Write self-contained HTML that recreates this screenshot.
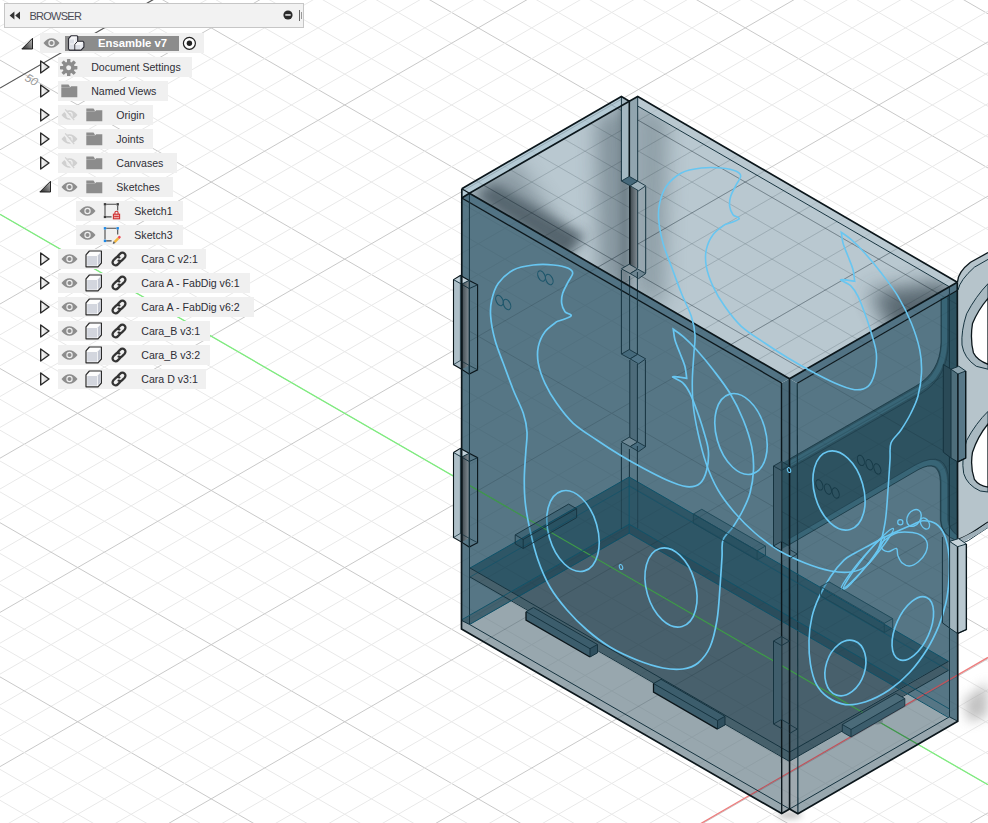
<!DOCTYPE html>
<html><head><meta charset="utf-8"><title>Fusion</title>
<style>
html,body{margin:0;padding:0;background:#fff;}
body{width:988px;height:823px;overflow:hidden;position:relative;font-family:"Liberation Sans",sans-serif;}
#cv{position:absolute;left:0;top:0;}

#hdr{position:absolute;left:4px;top:3px;width:298px;height:23px;background:#f2f2f2;border:1px solid #c6c6c6;}
#hdr .t{position:absolute;left:24.5px;top:4.5px;font-size:11px;color:#4b4b55;letter-spacing:-0.75px;line-height:14px;}
.row{position:absolute;height:19.5px;background:#f0f0f0;}
.lb{position:absolute;font-size:10.6px;line-height:14px;color:#2e2e36;white-space:nowrap;}
.ic{position:absolute;}
.sel{position:absolute;left:65px;top:35.5px;width:114px;height:15.5px;background:#8c8c8c;}
.selt{position:absolute;left:98px;top:36.2px;font-size:11.3px;line-height:14px;font-weight:bold;color:#fff;white-space:nowrap;}

</style></head><body>
<svg id="cv" width="988" height="823" viewBox="0 0 988 823">
<defs>
<filter id="b6" x="-100%" y="-100%" width="300%" height="300%"><feGaussianBlur stdDeviation="6"/></filter>
<filter id="b10" x="-100%" y="-100%" width="300%" height="300%"><feGaussianBlur stdDeviation="10"/></filter>
<filter id="b3" x="-100%" y="-100%" width="300%" height="300%"><feGaussianBlur stdDeviation="3"/></filter>
<linearGradient id="gTab" x1="0" y1="0" x2="1" y2="0"><stop offset="0" stop-color="#3d474d"/><stop offset="1" stop-color="#838e95"/></linearGradient>
<clipPath id="cTop"><polygon points="469.4,193.2 629.3,101.2 949.2,286.8 789.5,378.75"/></clipPath>
<clipPath id="cFL"><polygon points="461.8,198 781.5,383 781.7,813.6 461.5,629"/></clipPath>
<clipPath id="cFR"><polygon points="797.3,383.2 957.5,290.3 957.8,721.3 797.9,813.8"/></clipPath>
<clipPath id="cModel"><polygon points="461.8,188.7 621.4,96.5 629.3,101.2 637.7,96.5 957.5,282.3 957.8,721.3 797.9,813.8 789.6,809 781.7,813.6 461.5,629"/></clipPath>
</defs>
<g id="grid"><line x1="0" y1="-556.7" x2="988" y2="13.8" stroke="#c9c9c9" stroke-width="1"/>
<line x1="0" y1="-525.9" x2="988" y2="44.6" stroke="#e9e9e9" stroke-width="1"/>
<line x1="0" y1="-495.0" x2="988" y2="75.5" stroke="#e9e9e9" stroke-width="1"/>
<line x1="0" y1="-464.2" x2="988" y2="106.3" stroke="#e9e9e9" stroke-width="1"/>
<line x1="0" y1="-433.3" x2="988" y2="137.1" stroke="#e9e9e9" stroke-width="1"/>
<line x1="0" y1="-402.5" x2="988" y2="168.0" stroke="#c9c9c9" stroke-width="1"/>
<line x1="0" y1="-371.7" x2="988" y2="198.8" stroke="#e9e9e9" stroke-width="1"/>
<line x1="0" y1="-340.8" x2="988" y2="229.7" stroke="#e9e9e9" stroke-width="1"/>
<line x1="0" y1="-310.0" x2="988" y2="260.5" stroke="#e9e9e9" stroke-width="1"/>
<line x1="0" y1="-279.1" x2="988" y2="291.3" stroke="#e9e9e9" stroke-width="1"/>
<line x1="0" y1="-248.3" x2="988" y2="322.2" stroke="#c9c9c9" stroke-width="1"/>
<line x1="0" y1="-217.5" x2="988" y2="353.0" stroke="#e9e9e9" stroke-width="1"/>
<line x1="0" y1="-186.6" x2="988" y2="383.9" stroke="#e9e9e9" stroke-width="1"/>
<line x1="0" y1="-155.8" x2="988" y2="414.7" stroke="#e9e9e9" stroke-width="1"/>
<line x1="0" y1="-124.9" x2="988" y2="445.5" stroke="#e9e9e9" stroke-width="1"/>
<line x1="0" y1="-94.1" x2="988" y2="476.4" stroke="#c9c9c9" stroke-width="1"/>
<line x1="0" y1="-4.4" x2="988" y2="-574.9" stroke="#c9c9c9" stroke-width="1"/>
<line x1="0" y1="-63.3" x2="988" y2="507.2" stroke="#e9e9e9" stroke-width="1"/>
<line x1="0" y1="26.4" x2="988" y2="-544.0" stroke="#e9e9e9" stroke-width="1"/>
<line x1="0" y1="-32.4" x2="988" y2="538.1" stroke="#e9e9e9" stroke-width="1"/>
<line x1="0" y1="57.3" x2="988" y2="-513.2" stroke="#e9e9e9" stroke-width="1"/>
<line x1="0" y1="-1.6" x2="988" y2="568.9" stroke="#e9e9e9" stroke-width="1"/>
<line x1="0" y1="88.1" x2="988" y2="-482.4" stroke="#e9e9e9" stroke-width="1"/>
<line x1="0" y1="29.3" x2="988" y2="599.7" stroke="#e9e9e9" stroke-width="1"/>
<line x1="0" y1="119.0" x2="988" y2="-451.5" stroke="#e9e9e9" stroke-width="1"/>
<line x1="0" y1="60.1" x2="988" y2="630.6" stroke="#c9c9c9" stroke-width="1"/>
<line x1="0" y1="149.8" x2="988" y2="-420.7" stroke="#c9c9c9" stroke-width="1"/>
<line x1="0" y1="90.9" x2="988" y2="661.4" stroke="#e9e9e9" stroke-width="1"/>
<line x1="0" y1="180.6" x2="988" y2="-389.8" stroke="#e9e9e9" stroke-width="1"/>
<line x1="0" y1="121.8" x2="988" y2="692.3" stroke="#e9e9e9" stroke-width="1"/>
<line x1="0" y1="211.5" x2="988" y2="-359.0" stroke="#e9e9e9" stroke-width="1"/>
<line x1="0" y1="152.6" x2="988" y2="723.1" stroke="#e9e9e9" stroke-width="1"/>
<line x1="0" y1="242.3" x2="988" y2="-328.2" stroke="#e9e9e9" stroke-width="1"/>
<line x1="0" y1="183.5" x2="988" y2="753.9" stroke="#e9e9e9" stroke-width="1"/>
<line x1="0" y1="273.2" x2="988" y2="-297.3" stroke="#e9e9e9" stroke-width="1"/>
<line x1="0" y1="214.3" x2="988" y2="784.8" stroke="#c9c9c9" stroke-width="1"/>
<line x1="0" y1="304.0" x2="988" y2="-266.5" stroke="#c9c9c9" stroke-width="1"/>
<line x1="0" y1="245.1" x2="988" y2="815.6" stroke="#e9e9e9" stroke-width="1"/>
<line x1="0" y1="334.8" x2="988" y2="-235.6" stroke="#e9e9e9" stroke-width="1"/>
<line x1="0" y1="276.0" x2="988" y2="846.5" stroke="#e9e9e9" stroke-width="1"/>
<line x1="0" y1="365.7" x2="988" y2="-204.8" stroke="#e9e9e9" stroke-width="1"/>
<line x1="0" y1="306.8" x2="988" y2="877.3" stroke="#e9e9e9" stroke-width="1"/>
<line x1="0" y1="396.5" x2="988" y2="-174.0" stroke="#e9e9e9" stroke-width="1"/>
<line x1="0" y1="337.7" x2="988" y2="908.1" stroke="#e9e9e9" stroke-width="1"/>
<line x1="0" y1="427.4" x2="988" y2="-143.1" stroke="#e9e9e9" stroke-width="1"/>
<line x1="0" y1="368.5" x2="988" y2="939.0" stroke="#c9c9c9" stroke-width="1"/>
<line x1="0" y1="458.2" x2="988" y2="-112.3" stroke="#c9c9c9" stroke-width="1"/>
<line x1="0" y1="399.3" x2="988" y2="969.8" stroke="#e9e9e9" stroke-width="1"/>
<line x1="0" y1="489.0" x2="988" y2="-81.4" stroke="#e9e9e9" stroke-width="1"/>
<line x1="0" y1="430.2" x2="988" y2="1000.7" stroke="#e9e9e9" stroke-width="1"/>
<line x1="0" y1="519.9" x2="988" y2="-50.6" stroke="#e9e9e9" stroke-width="1"/>
<line x1="0" y1="461.0" x2="988" y2="1031.5" stroke="#e9e9e9" stroke-width="1"/>
<line x1="0" y1="550.7" x2="988" y2="-19.8" stroke="#e9e9e9" stroke-width="1"/>
<line x1="0" y1="491.9" x2="988" y2="1062.3" stroke="#e9e9e9" stroke-width="1"/>
<line x1="0" y1="581.6" x2="988" y2="11.1" stroke="#e9e9e9" stroke-width="1"/>
<line x1="0" y1="522.7" x2="988" y2="1093.2" stroke="#c9c9c9" stroke-width="1"/>
<line x1="0" y1="612.4" x2="988" y2="41.9" stroke="#c9c9c9" stroke-width="1"/>
<line x1="0" y1="553.5" x2="988" y2="1124.0" stroke="#e9e9e9" stroke-width="1"/>
<line x1="0" y1="643.2" x2="988" y2="72.8" stroke="#e9e9e9" stroke-width="1"/>
<line x1="0" y1="584.4" x2="988" y2="1154.9" stroke="#e9e9e9" stroke-width="1"/>
<line x1="0" y1="674.1" x2="988" y2="103.6" stroke="#e9e9e9" stroke-width="1"/>
<line x1="0" y1="615.2" x2="988" y2="1185.7" stroke="#e9e9e9" stroke-width="1"/>
<line x1="0" y1="704.9" x2="988" y2="134.4" stroke="#e9e9e9" stroke-width="1"/>
<line x1="0" y1="646.1" x2="988" y2="1216.5" stroke="#e9e9e9" stroke-width="1"/>
<line x1="0" y1="735.8" x2="988" y2="165.3" stroke="#e9e9e9" stroke-width="1"/>
<line x1="0" y1="676.9" x2="988" y2="1247.4" stroke="#c9c9c9" stroke-width="1"/>
<line x1="0" y1="766.6" x2="988" y2="196.1" stroke="#c9c9c9" stroke-width="1"/>
<line x1="0" y1="707.7" x2="988" y2="1278.2" stroke="#e9e9e9" stroke-width="1"/>
<line x1="0" y1="797.4" x2="988" y2="227.0" stroke="#e9e9e9" stroke-width="1"/>
<line x1="0" y1="738.6" x2="988" y2="1309.1" stroke="#e9e9e9" stroke-width="1"/>
<line x1="0" y1="828.3" x2="988" y2="257.8" stroke="#e9e9e9" stroke-width="1"/>
<line x1="0" y1="769.4" x2="988" y2="1339.9" stroke="#e9e9e9" stroke-width="1"/>
<line x1="0" y1="859.1" x2="988" y2="288.6" stroke="#e9e9e9" stroke-width="1"/>
<line x1="0" y1="800.3" x2="988" y2="1370.7" stroke="#e9e9e9" stroke-width="1"/>
<line x1="0" y1="890.0" x2="988" y2="319.5" stroke="#e9e9e9" stroke-width="1"/>
<line x1="0" y1="920.8" x2="988" y2="350.3" stroke="#c9c9c9" stroke-width="1"/>
<line x1="0" y1="951.6" x2="988" y2="381.2" stroke="#e9e9e9" stroke-width="1"/>
<line x1="0" y1="982.5" x2="988" y2="412.0" stroke="#e9e9e9" stroke-width="1"/>
<line x1="0" y1="1013.3" x2="988" y2="442.8" stroke="#e9e9e9" stroke-width="1"/>
<line x1="0" y1="1044.2" x2="988" y2="473.7" stroke="#e9e9e9" stroke-width="1"/>
<line x1="0" y1="1075.0" x2="988" y2="504.5" stroke="#c9c9c9" stroke-width="1"/>
<line x1="0" y1="1105.8" x2="988" y2="535.4" stroke="#e9e9e9" stroke-width="1"/>
<line x1="0" y1="1136.7" x2="988" y2="566.2" stroke="#e9e9e9" stroke-width="1"/>
<line x1="0" y1="1167.5" x2="988" y2="597.0" stroke="#e9e9e9" stroke-width="1"/>
<line x1="0" y1="1198.4" x2="988" y2="627.9" stroke="#e9e9e9" stroke-width="1"/>
<line x1="0" y1="1229.2" x2="988" y2="658.7" stroke="#c9c9c9" stroke-width="1"/>
<line x1="0" y1="1260.0" x2="988" y2="689.6" stroke="#e9e9e9" stroke-width="1"/>
<line x1="0" y1="1290.9" x2="988" y2="720.4" stroke="#e9e9e9" stroke-width="1"/>
<line x1="0" y1="1321.7" x2="988" y2="751.2" stroke="#e9e9e9" stroke-width="1"/>
<line x1="0" y1="1352.6" x2="988" y2="782.1" stroke="#e9e9e9" stroke-width="1"/>
<line x1="0" y1="1383.4" x2="988" y2="812.9" stroke="#c9c9c9" stroke-width="1"/></g>
<line x1="0" y1="214.3" x2="988" y2="784.8" stroke="#7dee7d" stroke-width="1.3"/>
<line x1="0" y1="1229" x2="988" y2="657.4" stroke="#ee7d7d" stroke-width="1.3"/>
<line x1="0" y1="88.1" x2="160" y2="-4.3" stroke="#555" stroke-width="1.2"/>
<text x="0" y="0" transform="translate(24,80) rotate(30)" font-family="Liberation Sans, sans-serif" font-size="11.5" font-style="italic" fill="#9a9a9a">50</text>
<text x="0" y="0" transform="translate(158,-5) rotate(30)" font-family="Liberation Sans, sans-serif" font-size="11.5" font-style="italic" fill="#9a9a9a">50</text>
<ellipse cx="790" cy="815" rx="12" ry="4" fill="#888" opacity="0.5" filter="url(#b3)"/>
<polygon points="469.4,193.2 629.3,101.2 949.4,286.8 789.5,378.8" fill="#b9c8d0" stroke="none" stroke-width="1" />
<polygon points="461.8,188.7 621.4,96.5 629.3,101.2 469.4,193.2 461.8,198.0" fill="#b4cad5" stroke="none" stroke-width="1" />
<polygon points="629.3,101.2 637.7,96.5 957.3,282.3 949.4,286.8" fill="#b9c8d0" stroke="none" stroke-width="1" />
<g clip-path="url(#cTop)">
<polygon points="476,196 494,184 585,236 566,260" fill="#3f4f58" opacity="0.82" filter="url(#b6)"/>
<polygon points="462,186 515,160 560,225 500,232" fill="#56666f" opacity="0.45" filter="url(#b10)"/>
<polygon points="596,120 630,100 630,300 600,280" fill="#5f7079" opacity="0.6" filter="url(#b10)"/>
<polygon points="620,105 630,100 630,290 620,285" fill="#56666f" opacity="0.55" filter="url(#b3)"/>
<polygon points="637,100 668,118 664,310 637,295" fill="#6a7b84" opacity="0.55" filter="url(#b10)"/>
<polygon points="870,292 952,280 952,360 900,350" fill="#3f4f58" opacity="0.8" filter="url(#b10)"/>
</g>
<polygon points="461.8,198.0 781.5,383.0 781.7,813.6 461.5,629.0" fill="#567685" stroke="none" stroke-width="1" />
<polygon points="469.4,193.2 789.5,378.8 781.5,383.0 461.8,198.0" fill="#527384" stroke="none" stroke-width="1" />
<polygon points="797.3,383.2 957.5,290.3 957.8,721.3 797.9,813.8" fill="#567685" stroke="none" stroke-width="1" />
<polygon points="789.5,378.8 949.4,286.8 957.5,282.5 957.5,290.3 797.3,383.2" fill="#527384" stroke="none" stroke-width="1" />
<polygon points="781.5,383.0 789.5,378.8 789.6,809.0 781.7,813.6" fill="#4b6a79" stroke="none" stroke-width="1" />
<polygon points="789.5,378.8 797.3,383.2 797.9,813.8 789.6,809.0" fill="#507282" stroke="none" stroke-width="1" />
<g clip-path="url(#cModel)">
<polygon points="470.0,568.0 629.2,477.0 629.2,533.2 519.4,596.5" fill="#2e5666" stroke="none" stroke-width="1" />
<polygon points="629.2,477.0 948.5,661.3 898.7,688.8 629.2,533.2" fill="#2e5666" stroke="none" stroke-width="1" />
<polygon points="629.2,533.2 898.7,688.8 789.3,752.3 519.4,596.5" fill="#48606c" stroke="none" stroke-width="1" />
<polygon points="629.2,524.2 629.2,533.2 519.4,596.5 511.6,592.0" fill="#2a4d5c" stroke="none" stroke-width="1" />
<polygon points="629.2,524.2 906.8,684.4 898.7,688.8 629.2,533.2" fill="#2a4d5c" stroke="none" stroke-width="1" />
<polygon points="470.0,568.0 789.3,752.3 789.3,761.3 470.0,577.0" fill="#46606b" stroke="none" stroke-width="1" />
<polygon points="789.3,752.3 948.5,661.3 948.5,670.3 789.3,761.3" fill="#425c68" stroke="none" stroke-width="1" />
<polygon points="469.6,624.5 511.6,600.6 781.7,756.6 781.7,813.6 461.5,629.0 461.5,620.4" fill="#98a7ae" stroke="none" stroke-width="1" />
<polygon points="461.5,619.9 502.4,596.3 511.6,600.6 469.6,624.5 461.5,620.4" fill="#43626f" stroke="none" stroke-width="1" />
<polygon points="797.3,756.7 906.9,693.4 949.5,717.5 957.8,721.3 797.9,813.8" fill="#98a7ae" stroke="none" stroke-width="1" />
<polygon points="781.5,757.0 789.5,761.3 789.6,809.0 781.7,813.6" fill="#9ba6ac" stroke="none" stroke-width="1" />
<polygon points="789.5,761.3 797.3,756.7 797.9,813.8 789.6,809.0" fill="#9fa9af" stroke="none" stroke-width="1" />
</g>
<g clip-path="url(#cModel)"><path d="M941,298.5 L941,343 Q940,372 916,386 L781.5,463.6 L781.5,549.2 L918,469.8 Q939.5,458 940.4,482 L940.4,520 Q941,535 957.5,541 L957.5,290.3 L949.5,295 Z" fill="#2d5260"/>
<path d="M944.5,296.5 L944.5,343 Q943.5,375 919,389.5 L789.5,464" fill="none" stroke="#3b687a" stroke-width="5" opacity="0.85"/>
<path d="M789.5,541.5 L917,467.2 Q943.5,453 944.4,482 L944.4,520 Q945,532 957.5,538.5" fill="none" stroke="#3b687a" stroke-width="5.5" opacity="0.85"/>
<path d="M941,298.5 L941,343 Q940,372 916,386 L789.5,459" fill="none" stroke="#16333f" stroke-width="0.9" opacity="0.8"/>
<path d="M948.3,294 L948.3,344 Q947,378 922,393 L789.5,469" fill="none" stroke="#16333f" stroke-width="0.8" opacity="0.6"/>
<path d="M789.5,544.5 L918,469.8 Q939.5,458 940.4,482 L940.4,520 Q941,535 957.5,541" fill="none" stroke="#16333f" stroke-width="0.9" opacity="0.8"/>
<path d="M789.5,538.5 L916,464.6 Q948,448 948.6,482 L948.6,520 Q949.2,530 957.5,535.5" fill="none" stroke="#16333f" stroke-width="0.8" opacity="0.6"/>
</g>
<g clip-path="url(#cTop)"><line x1="0" y1="-556.7" x2="988" y2="13.8" stroke="rgba(20,35,45,0.27)" stroke-width="1"/>
<line x1="0" y1="-525.9" x2="988" y2="44.6" stroke="rgba(20,35,45,0.11)" stroke-width="1"/>
<line x1="0" y1="-495.0" x2="988" y2="75.5" stroke="rgba(20,35,45,0.11)" stroke-width="1"/>
<line x1="0" y1="-464.2" x2="988" y2="106.3" stroke="rgba(20,35,45,0.11)" stroke-width="1"/>
<line x1="0" y1="-433.3" x2="988" y2="137.1" stroke="rgba(20,35,45,0.11)" stroke-width="1"/>
<line x1="0" y1="-402.5" x2="988" y2="168.0" stroke="rgba(20,35,45,0.27)" stroke-width="1"/>
<line x1="0" y1="-371.7" x2="988" y2="198.8" stroke="rgba(20,35,45,0.11)" stroke-width="1"/>
<line x1="0" y1="-340.8" x2="988" y2="229.7" stroke="rgba(20,35,45,0.11)" stroke-width="1"/>
<line x1="0" y1="-310.0" x2="988" y2="260.5" stroke="rgba(20,35,45,0.11)" stroke-width="1"/>
<line x1="0" y1="-279.1" x2="988" y2="291.3" stroke="rgba(20,35,45,0.11)" stroke-width="1"/>
<line x1="0" y1="-248.3" x2="988" y2="322.2" stroke="rgba(20,35,45,0.27)" stroke-width="1"/>
<line x1="0" y1="-217.5" x2="988" y2="353.0" stroke="rgba(20,35,45,0.11)" stroke-width="1"/>
<line x1="0" y1="-186.6" x2="988" y2="383.9" stroke="rgba(20,35,45,0.11)" stroke-width="1"/>
<line x1="0" y1="-155.8" x2="988" y2="414.7" stroke="rgba(20,35,45,0.11)" stroke-width="1"/>
<line x1="0" y1="-124.9" x2="988" y2="445.5" stroke="rgba(20,35,45,0.11)" stroke-width="1"/>
<line x1="0" y1="-94.1" x2="988" y2="476.4" stroke="rgba(20,35,45,0.27)" stroke-width="1"/>
<line x1="0" y1="-4.4" x2="988" y2="-574.9" stroke="rgba(20,35,45,0.27)" stroke-width="1"/>
<line x1="0" y1="-63.3" x2="988" y2="507.2" stroke="rgba(20,35,45,0.11)" stroke-width="1"/>
<line x1="0" y1="26.4" x2="988" y2="-544.0" stroke="rgba(20,35,45,0.11)" stroke-width="1"/>
<line x1="0" y1="-32.4" x2="988" y2="538.1" stroke="rgba(20,35,45,0.11)" stroke-width="1"/>
<line x1="0" y1="57.3" x2="988" y2="-513.2" stroke="rgba(20,35,45,0.11)" stroke-width="1"/>
<line x1="0" y1="-1.6" x2="988" y2="568.9" stroke="rgba(20,35,45,0.11)" stroke-width="1"/>
<line x1="0" y1="88.1" x2="988" y2="-482.4" stroke="rgba(20,35,45,0.11)" stroke-width="1"/>
<line x1="0" y1="29.3" x2="988" y2="599.7" stroke="rgba(20,35,45,0.11)" stroke-width="1"/>
<line x1="0" y1="119.0" x2="988" y2="-451.5" stroke="rgba(20,35,45,0.11)" stroke-width="1"/>
<line x1="0" y1="60.1" x2="988" y2="630.6" stroke="rgba(20,35,45,0.27)" stroke-width="1"/>
<line x1="0" y1="149.8" x2="988" y2="-420.7" stroke="rgba(20,35,45,0.27)" stroke-width="1"/>
<line x1="0" y1="90.9" x2="988" y2="661.4" stroke="rgba(20,35,45,0.11)" stroke-width="1"/>
<line x1="0" y1="180.6" x2="988" y2="-389.8" stroke="rgba(20,35,45,0.11)" stroke-width="1"/>
<line x1="0" y1="121.8" x2="988" y2="692.3" stroke="rgba(20,35,45,0.11)" stroke-width="1"/>
<line x1="0" y1="211.5" x2="988" y2="-359.0" stroke="rgba(20,35,45,0.11)" stroke-width="1"/>
<line x1="0" y1="152.6" x2="988" y2="723.1" stroke="rgba(20,35,45,0.11)" stroke-width="1"/>
<line x1="0" y1="242.3" x2="988" y2="-328.2" stroke="rgba(20,35,45,0.11)" stroke-width="1"/>
<line x1="0" y1="183.5" x2="988" y2="753.9" stroke="rgba(20,35,45,0.11)" stroke-width="1"/>
<line x1="0" y1="273.2" x2="988" y2="-297.3" stroke="rgba(20,35,45,0.11)" stroke-width="1"/>
<line x1="0" y1="214.3" x2="988" y2="784.8" stroke="rgba(20,35,45,0.27)" stroke-width="1"/>
<line x1="0" y1="304.0" x2="988" y2="-266.5" stroke="rgba(20,35,45,0.27)" stroke-width="1"/>
<line x1="0" y1="245.1" x2="988" y2="815.6" stroke="rgba(20,35,45,0.11)" stroke-width="1"/>
<line x1="0" y1="334.8" x2="988" y2="-235.6" stroke="rgba(20,35,45,0.11)" stroke-width="1"/>
<line x1="0" y1="276.0" x2="988" y2="846.5" stroke="rgba(20,35,45,0.11)" stroke-width="1"/>
<line x1="0" y1="365.7" x2="988" y2="-204.8" stroke="rgba(20,35,45,0.11)" stroke-width="1"/>
<line x1="0" y1="306.8" x2="988" y2="877.3" stroke="rgba(20,35,45,0.11)" stroke-width="1"/>
<line x1="0" y1="396.5" x2="988" y2="-174.0" stroke="rgba(20,35,45,0.11)" stroke-width="1"/>
<line x1="0" y1="337.7" x2="988" y2="908.1" stroke="rgba(20,35,45,0.11)" stroke-width="1"/>
<line x1="0" y1="427.4" x2="988" y2="-143.1" stroke="rgba(20,35,45,0.11)" stroke-width="1"/>
<line x1="0" y1="368.5" x2="988" y2="939.0" stroke="rgba(20,35,45,0.27)" stroke-width="1"/>
<line x1="0" y1="458.2" x2="988" y2="-112.3" stroke="rgba(20,35,45,0.27)" stroke-width="1"/>
<line x1="0" y1="399.3" x2="988" y2="969.8" stroke="rgba(20,35,45,0.11)" stroke-width="1"/>
<line x1="0" y1="489.0" x2="988" y2="-81.4" stroke="rgba(20,35,45,0.11)" stroke-width="1"/>
<line x1="0" y1="430.2" x2="988" y2="1000.7" stroke="rgba(20,35,45,0.11)" stroke-width="1"/>
<line x1="0" y1="519.9" x2="988" y2="-50.6" stroke="rgba(20,35,45,0.11)" stroke-width="1"/>
<line x1="0" y1="461.0" x2="988" y2="1031.5" stroke="rgba(20,35,45,0.11)" stroke-width="1"/>
<line x1="0" y1="550.7" x2="988" y2="-19.8" stroke="rgba(20,35,45,0.11)" stroke-width="1"/>
<line x1="0" y1="491.9" x2="988" y2="1062.3" stroke="rgba(20,35,45,0.11)" stroke-width="1"/>
<line x1="0" y1="581.6" x2="988" y2="11.1" stroke="rgba(20,35,45,0.11)" stroke-width="1"/>
<line x1="0" y1="522.7" x2="988" y2="1093.2" stroke="rgba(20,35,45,0.27)" stroke-width="1"/>
<line x1="0" y1="612.4" x2="988" y2="41.9" stroke="rgba(20,35,45,0.27)" stroke-width="1"/>
<line x1="0" y1="553.5" x2="988" y2="1124.0" stroke="rgba(20,35,45,0.11)" stroke-width="1"/>
<line x1="0" y1="643.2" x2="988" y2="72.8" stroke="rgba(20,35,45,0.11)" stroke-width="1"/>
<line x1="0" y1="584.4" x2="988" y2="1154.9" stroke="rgba(20,35,45,0.11)" stroke-width="1"/>
<line x1="0" y1="674.1" x2="988" y2="103.6" stroke="rgba(20,35,45,0.11)" stroke-width="1"/>
<line x1="0" y1="615.2" x2="988" y2="1185.7" stroke="rgba(20,35,45,0.11)" stroke-width="1"/>
<line x1="0" y1="704.9" x2="988" y2="134.4" stroke="rgba(20,35,45,0.11)" stroke-width="1"/>
<line x1="0" y1="646.1" x2="988" y2="1216.5" stroke="rgba(20,35,45,0.11)" stroke-width="1"/>
<line x1="0" y1="735.8" x2="988" y2="165.3" stroke="rgba(20,35,45,0.11)" stroke-width="1"/>
<line x1="0" y1="676.9" x2="988" y2="1247.4" stroke="rgba(20,35,45,0.27)" stroke-width="1"/>
<line x1="0" y1="766.6" x2="988" y2="196.1" stroke="rgba(20,35,45,0.27)" stroke-width="1"/>
<line x1="0" y1="707.7" x2="988" y2="1278.2" stroke="rgba(20,35,45,0.11)" stroke-width="1"/>
<line x1="0" y1="797.4" x2="988" y2="227.0" stroke="rgba(20,35,45,0.11)" stroke-width="1"/>
<line x1="0" y1="738.6" x2="988" y2="1309.1" stroke="rgba(20,35,45,0.11)" stroke-width="1"/>
<line x1="0" y1="828.3" x2="988" y2="257.8" stroke="rgba(20,35,45,0.11)" stroke-width="1"/>
<line x1="0" y1="769.4" x2="988" y2="1339.9" stroke="rgba(20,35,45,0.11)" stroke-width="1"/>
<line x1="0" y1="859.1" x2="988" y2="288.6" stroke="rgba(20,35,45,0.11)" stroke-width="1"/>
<line x1="0" y1="800.3" x2="988" y2="1370.7" stroke="rgba(20,35,45,0.11)" stroke-width="1"/>
<line x1="0" y1="890.0" x2="988" y2="319.5" stroke="rgba(20,35,45,0.11)" stroke-width="1"/>
<line x1="0" y1="920.8" x2="988" y2="350.3" stroke="rgba(20,35,45,0.27)" stroke-width="1"/>
<line x1="0" y1="951.6" x2="988" y2="381.2" stroke="rgba(20,35,45,0.11)" stroke-width="1"/>
<line x1="0" y1="982.5" x2="988" y2="412.0" stroke="rgba(20,35,45,0.11)" stroke-width="1"/>
<line x1="0" y1="1013.3" x2="988" y2="442.8" stroke="rgba(20,35,45,0.11)" stroke-width="1"/>
<line x1="0" y1="1044.2" x2="988" y2="473.7" stroke="rgba(20,35,45,0.11)" stroke-width="1"/>
<line x1="0" y1="1075.0" x2="988" y2="504.5" stroke="rgba(20,35,45,0.27)" stroke-width="1"/>
<line x1="0" y1="1105.8" x2="988" y2="535.4" stroke="rgba(20,35,45,0.11)" stroke-width="1"/>
<line x1="0" y1="1136.7" x2="988" y2="566.2" stroke="rgba(20,35,45,0.11)" stroke-width="1"/>
<line x1="0" y1="1167.5" x2="988" y2="597.0" stroke="rgba(20,35,45,0.11)" stroke-width="1"/>
<line x1="0" y1="1198.4" x2="988" y2="627.9" stroke="rgba(20,35,45,0.11)" stroke-width="1"/>
<line x1="0" y1="1229.2" x2="988" y2="658.7" stroke="rgba(20,35,45,0.27)" stroke-width="1"/>
<line x1="0" y1="1260.0" x2="988" y2="689.6" stroke="rgba(20,35,45,0.11)" stroke-width="1"/>
<line x1="0" y1="1290.9" x2="988" y2="720.4" stroke="rgba(20,35,45,0.11)" stroke-width="1"/>
<line x1="0" y1="1321.7" x2="988" y2="751.2" stroke="rgba(20,35,45,0.11)" stroke-width="1"/>
<line x1="0" y1="1352.6" x2="988" y2="782.1" stroke="rgba(20,35,45,0.11)" stroke-width="1"/>
<line x1="0" y1="1383.4" x2="988" y2="812.9" stroke="rgba(20,35,45,0.27)" stroke-width="1"/></g>
<g clip-path="url(#cModel)" opacity="0.16"><line x1="0" y1="-556.7" x2="988" y2="13.8" stroke="#0c1c24" stroke-width="1"/>
<line x1="0" y1="-402.5" x2="988" y2="168.0" stroke="#0c1c24" stroke-width="1"/>
<line x1="0" y1="-248.3" x2="988" y2="322.2" stroke="#0c1c24" stroke-width="1"/>
<line x1="0" y1="-94.1" x2="988" y2="476.4" stroke="#0c1c24" stroke-width="1"/>
<line x1="0" y1="-4.4" x2="988" y2="-574.9" stroke="#0c1c24" stroke-width="1"/>
<line x1="0" y1="60.1" x2="988" y2="630.6" stroke="#0c1c24" stroke-width="1"/>
<line x1="0" y1="149.8" x2="988" y2="-420.7" stroke="#0c1c24" stroke-width="1"/>
<line x1="0" y1="214.3" x2="988" y2="784.8" stroke="#0c1c24" stroke-width="1"/>
<line x1="0" y1="304.0" x2="988" y2="-266.5" stroke="#0c1c24" stroke-width="1"/>
<line x1="0" y1="368.5" x2="988" y2="939.0" stroke="#0c1c24" stroke-width="1"/>
<line x1="0" y1="458.2" x2="988" y2="-112.3" stroke="#0c1c24" stroke-width="1"/>
<line x1="0" y1="522.7" x2="988" y2="1093.2" stroke="#0c1c24" stroke-width="1"/>
<line x1="0" y1="612.4" x2="988" y2="41.9" stroke="#0c1c24" stroke-width="1"/>
<line x1="0" y1="676.9" x2="988" y2="1247.4" stroke="#0c1c24" stroke-width="1"/>
<line x1="0" y1="766.6" x2="988" y2="196.1" stroke="#0c1c24" stroke-width="1"/>
<line x1="0" y1="920.8" x2="988" y2="350.3" stroke="#0c1c24" stroke-width="1"/>
<line x1="0" y1="1075.0" x2="988" y2="504.5" stroke="#0c1c24" stroke-width="1"/>
<line x1="0" y1="1229.2" x2="988" y2="658.7" stroke="#0c1c24" stroke-width="1"/>
<line x1="0" y1="1383.4" x2="988" y2="812.9" stroke="#0c1c24" stroke-width="1"/></g>
<g clip-path="url(#cModel)" opacity="0.05"><line x1="0" y1="-525.9" x2="988" y2="44.6" stroke="#0c1c24" stroke-width="1"/>
<line x1="0" y1="-495.0" x2="988" y2="75.5" stroke="#0c1c24" stroke-width="1"/>
<line x1="0" y1="-464.2" x2="988" y2="106.3" stroke="#0c1c24" stroke-width="1"/>
<line x1="0" y1="-433.3" x2="988" y2="137.1" stroke="#0c1c24" stroke-width="1"/>
<line x1="0" y1="-371.7" x2="988" y2="198.8" stroke="#0c1c24" stroke-width="1"/>
<line x1="0" y1="-340.8" x2="988" y2="229.7" stroke="#0c1c24" stroke-width="1"/>
<line x1="0" y1="-310.0" x2="988" y2="260.5" stroke="#0c1c24" stroke-width="1"/>
<line x1="0" y1="-279.1" x2="988" y2="291.3" stroke="#0c1c24" stroke-width="1"/>
<line x1="0" y1="-217.5" x2="988" y2="353.0" stroke="#0c1c24" stroke-width="1"/>
<line x1="0" y1="-186.6" x2="988" y2="383.9" stroke="#0c1c24" stroke-width="1"/>
<line x1="0" y1="-155.8" x2="988" y2="414.7" stroke="#0c1c24" stroke-width="1"/>
<line x1="0" y1="-124.9" x2="988" y2="445.5" stroke="#0c1c24" stroke-width="1"/>
<line x1="0" y1="-63.3" x2="988" y2="507.2" stroke="#0c1c24" stroke-width="1"/>
<line x1="0" y1="26.4" x2="988" y2="-544.0" stroke="#0c1c24" stroke-width="1"/>
<line x1="0" y1="-32.4" x2="988" y2="538.1" stroke="#0c1c24" stroke-width="1"/>
<line x1="0" y1="57.3" x2="988" y2="-513.2" stroke="#0c1c24" stroke-width="1"/>
<line x1="0" y1="-1.6" x2="988" y2="568.9" stroke="#0c1c24" stroke-width="1"/>
<line x1="0" y1="88.1" x2="988" y2="-482.4" stroke="#0c1c24" stroke-width="1"/>
<line x1="0" y1="29.3" x2="988" y2="599.7" stroke="#0c1c24" stroke-width="1"/>
<line x1="0" y1="119.0" x2="988" y2="-451.5" stroke="#0c1c24" stroke-width="1"/>
<line x1="0" y1="90.9" x2="988" y2="661.4" stroke="#0c1c24" stroke-width="1"/>
<line x1="0" y1="180.6" x2="988" y2="-389.8" stroke="#0c1c24" stroke-width="1"/>
<line x1="0" y1="121.8" x2="988" y2="692.3" stroke="#0c1c24" stroke-width="1"/>
<line x1="0" y1="211.5" x2="988" y2="-359.0" stroke="#0c1c24" stroke-width="1"/>
<line x1="0" y1="152.6" x2="988" y2="723.1" stroke="#0c1c24" stroke-width="1"/>
<line x1="0" y1="242.3" x2="988" y2="-328.2" stroke="#0c1c24" stroke-width="1"/>
<line x1="0" y1="183.5" x2="988" y2="753.9" stroke="#0c1c24" stroke-width="1"/>
<line x1="0" y1="273.2" x2="988" y2="-297.3" stroke="#0c1c24" stroke-width="1"/>
<line x1="0" y1="245.1" x2="988" y2="815.6" stroke="#0c1c24" stroke-width="1"/>
<line x1="0" y1="334.8" x2="988" y2="-235.6" stroke="#0c1c24" stroke-width="1"/>
<line x1="0" y1="276.0" x2="988" y2="846.5" stroke="#0c1c24" stroke-width="1"/>
<line x1="0" y1="365.7" x2="988" y2="-204.8" stroke="#0c1c24" stroke-width="1"/>
<line x1="0" y1="306.8" x2="988" y2="877.3" stroke="#0c1c24" stroke-width="1"/>
<line x1="0" y1="396.5" x2="988" y2="-174.0" stroke="#0c1c24" stroke-width="1"/>
<line x1="0" y1="337.7" x2="988" y2="908.1" stroke="#0c1c24" stroke-width="1"/>
<line x1="0" y1="427.4" x2="988" y2="-143.1" stroke="#0c1c24" stroke-width="1"/>
<line x1="0" y1="399.3" x2="988" y2="969.8" stroke="#0c1c24" stroke-width="1"/>
<line x1="0" y1="489.0" x2="988" y2="-81.4" stroke="#0c1c24" stroke-width="1"/>
<line x1="0" y1="430.2" x2="988" y2="1000.7" stroke="#0c1c24" stroke-width="1"/>
<line x1="0" y1="519.9" x2="988" y2="-50.6" stroke="#0c1c24" stroke-width="1"/>
<line x1="0" y1="461.0" x2="988" y2="1031.5" stroke="#0c1c24" stroke-width="1"/>
<line x1="0" y1="550.7" x2="988" y2="-19.8" stroke="#0c1c24" stroke-width="1"/>
<line x1="0" y1="491.9" x2="988" y2="1062.3" stroke="#0c1c24" stroke-width="1"/>
<line x1="0" y1="581.6" x2="988" y2="11.1" stroke="#0c1c24" stroke-width="1"/>
<line x1="0" y1="553.5" x2="988" y2="1124.0" stroke="#0c1c24" stroke-width="1"/>
<line x1="0" y1="643.2" x2="988" y2="72.8" stroke="#0c1c24" stroke-width="1"/>
<line x1="0" y1="584.4" x2="988" y2="1154.9" stroke="#0c1c24" stroke-width="1"/>
<line x1="0" y1="674.1" x2="988" y2="103.6" stroke="#0c1c24" stroke-width="1"/>
<line x1="0" y1="615.2" x2="988" y2="1185.7" stroke="#0c1c24" stroke-width="1"/>
<line x1="0" y1="704.9" x2="988" y2="134.4" stroke="#0c1c24" stroke-width="1"/>
<line x1="0" y1="646.1" x2="988" y2="1216.5" stroke="#0c1c24" stroke-width="1"/>
<line x1="0" y1="735.8" x2="988" y2="165.3" stroke="#0c1c24" stroke-width="1"/>
<line x1="0" y1="707.7" x2="988" y2="1278.2" stroke="#0c1c24" stroke-width="1"/>
<line x1="0" y1="797.4" x2="988" y2="227.0" stroke="#0c1c24" stroke-width="1"/>
<line x1="0" y1="738.6" x2="988" y2="1309.1" stroke="#0c1c24" stroke-width="1"/>
<line x1="0" y1="828.3" x2="988" y2="257.8" stroke="#0c1c24" stroke-width="1"/>
<line x1="0" y1="769.4" x2="988" y2="1339.9" stroke="#0c1c24" stroke-width="1"/>
<line x1="0" y1="859.1" x2="988" y2="288.6" stroke="#0c1c24" stroke-width="1"/>
<line x1="0" y1="800.3" x2="988" y2="1370.7" stroke="#0c1c24" stroke-width="1"/>
<line x1="0" y1="890.0" x2="988" y2="319.5" stroke="#0c1c24" stroke-width="1"/>
<line x1="0" y1="951.6" x2="988" y2="381.2" stroke="#0c1c24" stroke-width="1"/>
<line x1="0" y1="982.5" x2="988" y2="412.0" stroke="#0c1c24" stroke-width="1"/>
<line x1="0" y1="1013.3" x2="988" y2="442.8" stroke="#0c1c24" stroke-width="1"/>
<line x1="0" y1="1044.2" x2="988" y2="473.7" stroke="#0c1c24" stroke-width="1"/>
<line x1="0" y1="1105.8" x2="988" y2="535.4" stroke="#0c1c24" stroke-width="1"/>
<line x1="0" y1="1136.7" x2="988" y2="566.2" stroke="#0c1c24" stroke-width="1"/>
<line x1="0" y1="1167.5" x2="988" y2="597.0" stroke="#0c1c24" stroke-width="1"/>
<line x1="0" y1="1198.4" x2="988" y2="627.9" stroke="#0c1c24" stroke-width="1"/>
<line x1="0" y1="1260.0" x2="988" y2="689.6" stroke="#0c1c24" stroke-width="1"/>
<line x1="0" y1="1290.9" x2="988" y2="720.4" stroke="#0c1c24" stroke-width="1"/>
<line x1="0" y1="1321.7" x2="988" y2="751.2" stroke="#0c1c24" stroke-width="1"/>
<line x1="0" y1="1352.6" x2="988" y2="782.1" stroke="#0c1c24" stroke-width="1"/></g>
<g clip-path="url(#cModel)">
<line x1="0" y1="214.3" x2="988" y2="784.8" stroke="#3f9a4a" stroke-width="1.2"/>
<line x1="0" y1="1229" x2="988" y2="657.4" stroke="#c2525a" stroke-width="1.2"/>
</g>
<path d="M957.5,282 Q958,272 970.5,262.3 L988,252.6 L988,522.1 L976.3,529.9 Q966,537 957.5,539.6 Z" fill="#b6c4cb" stroke="none" stroke-width="1" />
<path d="M988,283.7 Q976,296 966.6,313.8 Q961,331 962,345 Q964,358 976.3,366.3 L988,369.2 Z" fill="#a9b9c1" stroke="#16333f" stroke-width="1" />
<path d="M988,298.3 Q978,310 972.5,323.5 Q970,339 973.4,352.7 Q977,360 988,364.3 Z" fill="#ffffff" stroke="#0b161b" stroke-width="1.3" />
<path d="M988,411.4 Q976,423 966.6,440.5 Q961,458 963.7,473.5 Q967,485 980.2,491 L988,492 Z" fill="#a9b9c1" stroke="#16333f" stroke-width="1" />
<path d="M988,424 Q978,436 972.5,452.2 Q970,467 974.4,479.4 Q979,486 988,487.1 Z" fill="#ffffff" stroke="#0b161b" stroke-width="1.3" />
<path d="M957.5,282 Q958,272 970.5,262.3 L988,252.6" fill="none" stroke="#0b161b" stroke-width="1.3" />
<path d="M958,290 Q960,280 974.4,267.2 L988,259.4" fill="none" stroke="#16333f" stroke-width="1" />
<path d="M957.5,539.6 Q966,537 976.3,529.9 L988,522.1" fill="none" stroke="#0b161b" stroke-width="1.3" />
<path d="M958.9,544.5 Q968,542 978,534 L988,527.5" fill="none" stroke="#16333f" stroke-width="1" />
<polygon points="957.5,540.0 976.3,530.5 988.0,522.6 988.0,527.5 978.0,534.0 958.9,544.5" fill="#9fb0b9" stroke="none" stroke-width="1" />
<polygon points="964,700 988,682 988,716 968,722" fill="#9a9a9a" opacity="0.6" filter="url(#b6)"/>
<ellipse cx="877" cy="721" rx="6" ry="3.6" fill="#6d7c84" opacity="0.75"/>
<polygon points="453.5,279.6 461.6,284.2 461.6,369.2 453.5,364.6" fill="#aebfc8" stroke="none" stroke-width="1" />
<polygon points="453.5,279.6 460.4,275.5 469.2,280.4 461.6,284.2" fill="#c3d2da" stroke="none" stroke-width="1" />
<polygon points="461.6,284.2 469.2,280.4 469.2,365.4 461.6,369.2" fill="url(#gTab)" stroke="none" stroke-width="1" />
<polyline points="453.5,279.6 460.4,275.5 469.2,280.4 477.6,284.8 477.6,369.8 469.2,374.1 461.6,369.2 453.5,364.6 453.5,279.6" fill="none" stroke="#0b161b" stroke-width="1.1" />
<polyline points="461.6,284.2 461.6,369.2" fill="none" stroke="#0b161b" stroke-width="1.6" />
<polyline points="453.5,279.6 461.6,284.2 469.2,280.4" fill="none" stroke="#16333f" stroke-width="1" />
<polyline points="461.6,284.2 469.2,288.6 477.6,284.8" fill="none" stroke="#16333f" stroke-width="1" />
<polyline points="469.2,280.4 469.2,374.1" fill="none" stroke="#16333f" stroke-width="1" />
<polyline points="453.5,364.6 460.4,360.5 469.2,365.4 477.6,369.8" fill="none" stroke="#16333f" stroke-width="0.8" />
<polyline points="460.4,275.5 460.4,360.5" fill="none" stroke="#16333f" stroke-width="0.8" />
<polygon points="453.5,452.5 461.6,457.1 461.6,542.1 453.5,537.5" fill="#aebfc8" stroke="none" stroke-width="1" />
<polygon points="453.5,452.5 460.4,448.4 469.2,453.3 461.6,457.1" fill="#c3d2da" stroke="none" stroke-width="1" />
<polygon points="461.6,457.1 469.2,453.3 469.2,538.3 461.6,542.1" fill="url(#gTab)" stroke="none" stroke-width="1" />
<polyline points="453.5,452.5 460.4,448.4 469.2,453.3 477.6,457.7 477.6,542.7 469.2,547.0 461.6,542.1 453.5,537.5 453.5,452.5" fill="none" stroke="#0b161b" stroke-width="1.1" />
<polyline points="461.6,457.1 461.6,542.1" fill="none" stroke="#0b161b" stroke-width="1.6" />
<polyline points="453.5,452.5 461.6,457.1 469.2,453.3" fill="none" stroke="#16333f" stroke-width="1" />
<polyline points="461.6,457.1 469.2,461.5 477.6,457.7" fill="none" stroke="#16333f" stroke-width="1" />
<polyline points="469.2,453.3 469.2,547.0" fill="none" stroke="#16333f" stroke-width="1" />
<polyline points="453.5,537.5 460.4,533.4 469.2,538.3 477.6,542.7" fill="none" stroke="#16333f" stroke-width="0.8" />
<polyline points="460.4,448.4 460.4,533.4" fill="none" stroke="#16333f" stroke-width="0.8" />
<polyline points="461.8,198.0 781.5,383.0" fill="none" stroke="#0b161b" stroke-width="1.3" />
<polyline points="797.3,383.2 957.5,290.3" fill="none" stroke="#0b161b" stroke-width="1.1" />
<polyline points="629.3,101.2 949.4,286.8" fill="none" stroke="#16333f" stroke-width="1" />
<polyline points="469.4,193.2 469.5,624.5" fill="none" stroke="#16333f" stroke-width="1" />
<polyline points="949.4,286.8 949.5,716.8" fill="none" stroke="#16333f" stroke-width="1" />
<polyline points="797.3,383.2 797.9,813.8" fill="none" stroke="#16333f" stroke-width="1.2" />
<polyline points="461.5,620.4 469.6,624.5 789.6,809.0" fill="none" stroke="#16333f" stroke-width="1" />
<polyline points="789.6,809.0 949.5,716.8 957.8,721.3" fill="none" stroke="#16333f" stroke-width="1" />
<polyline points="470.0,568.0 629.2,477.0 948.5,661.3" fill="none" stroke="#0e5269" stroke-width="1" />
<polyline points="470.0,577.0 629.2,486.0 948.5,670.3" fill="none" stroke="#0e5269" stroke-width="0.8" opacity="0.8"/>
<polyline points="470.0,568.0 789.3,752.3 948.5,661.3" fill="none" stroke="#16333f" stroke-width="1" />
<polyline points="470.0,577.0 789.3,761.3 948.5,670.3" fill="none" stroke="#16333f" stroke-width="1" />
<polyline points="629.2,533.2 469.6,624.5" fill="none" stroke="#0e5269" stroke-width="1" />
<polyline points="629.2,524.2 461.5,619.9" fill="none" stroke="#0e5269" stroke-width="0.9" />
<polyline points="629.2,524.2 949.5,709.0" fill="none" stroke="#0e5269" stroke-width="0.9" />
<polyline points="629.2,533.2 948.5,717.5" fill="none" stroke="#0e5269" stroke-width="1" />
<polyline points="629.2,477.0 629.2,533.2" fill="none" stroke="#0e5269" stroke-width="1" />
<polyline points="621.4,481.5 621.4,529.0" fill="none" stroke="#16333f" stroke-width="0.8" opacity="0.7"/>
<polyline points="637.7,482.0 637.7,528.5" fill="none" stroke="#16333f" stroke-width="0.8" opacity="0.7"/>
<polygon points="621.4,97.0 629.3,101.5 629.3,176.5 621.4,181.0" fill="#a4b8c2" stroke="none" stroke-width="1" />
<polygon points="629.3,101.5 637.7,97.0 637.7,181.5 629.3,176.5" fill="#91a5af" stroke="none" stroke-width="1" />
<polyline points="621.4,96.5 621.4,181.0" fill="none" stroke="#16333f" stroke-width="1" />
<polyline points="637.7,96.5 637.7,181.0" fill="none" stroke="#16333f" stroke-width="1" />
<polygon points="629.8,186.0 637.7,190.5 637.7,268.0 629.8,266.0" fill="url(#gTab)" stroke="none" stroke-width="1" />
<polyline points="629.8,186.0 629.8,268.0" fill="none" stroke="#0b161b" stroke-width="1.5" />
<polyline points="637.7,190.0 637.7,268.0" fill="none" stroke="#16333f" stroke-width="1" />
<polyline points="645.7,186.5 645.7,273.0" fill="none" stroke="#16333f" stroke-width="1" />
<polygon points="621.4,181.0 629.3,176.4 637.7,181.2 630.2,185.8" fill="#46687a" stroke="#16333f" stroke-width="0.9" />
<polygon points="630.2,185.8 637.7,181.2 645.7,185.8 638.6,190.8" fill="#9db0ba" stroke="#16333f" stroke-width="0.9" />
<polygon points="621.4,268.8 629.3,264.2 637.7,269.0 630.2,273.6" fill="#87959c" stroke="#16333f" stroke-width="0.9" />
<polygon points="630.2,273.6 637.7,269.0 645.7,273.6 638.6,278.6" fill="#6f8692" stroke="#16333f" stroke-width="0.9" />
<polyline points="621.4,270.0 621.4,354.0" fill="none" stroke="#16333f" stroke-width="1" />
<polyline points="629.6,276.0 629.6,354.0" fill="none" stroke="#16333f" stroke-width="1" />
<polyline points="637.4,272.0 637.4,356.0" fill="none" stroke="#16333f" stroke-width="1" />
<polygon points="621.4,354.1 629.3,349.5 637.7,354.3 630.2,358.9" fill="#45697b" stroke="#16333f" stroke-width="0.9" />
<polygon points="630.2,358.9 637.7,354.3 645.7,358.9 638.6,363.9" fill="#507487" stroke="#16333f" stroke-width="0.9" />
<polygon points="629.8,360.0 637.4,364.0 637.4,442.0 629.8,440.0" fill="#4d6b7a" stroke="none" stroke-width="1" />
<polyline points="629.8,360.0 629.8,441.0" fill="none" stroke="#16333f" stroke-width="1" />
<polyline points="637.4,364.0 637.4,443.0" fill="none" stroke="#16333f" stroke-width="1" />
<polyline points="645.4,360.0 645.4,447.0" fill="none" stroke="#16333f" stroke-width="1" />
<polygon points="621.4,441.8 629.3,437.2 637.7,442.0 630.2,446.6" fill="#6d8794" stroke="#16333f" stroke-width="0.9" />
<polygon points="630.2,446.6 637.7,442.0 645.7,446.6 638.6,451.6" fill="#486c7e" stroke="#16333f" stroke-width="0.9" />
<polyline points="621.4,443.0 621.4,481.5" fill="none" stroke="#16333f" stroke-width="1" />
<polyline points="629.4,449.0 629.4,477.0" fill="none" stroke="#16333f" stroke-width="1" />
<polyline points="637.4,446.0 637.4,482.0" fill="none" stroke="#16333f" stroke-width="1" />
<polyline points="461.8,188.7 621.4,96.5 629.3,101.2 637.7,96.5 957.3,282.3" fill="none" stroke="#0b161b" stroke-width="1.7" />
<polyline points="957.3,282.3 957.8,721.3 797.9,813.8 789.6,809.0 781.7,813.6 461.5,629.0 461.8,188.7" fill="none" stroke="#0b161b" stroke-width="1.7" />
<polyline points="461.8,198.0 469.4,193.2 629.3,101.2" fill="none" stroke="#0b161b" stroke-width="1.6" />
<polyline points="469.4,193.2 789.5,378.8 957.3,282.3" fill="none" stroke="#0b161b" stroke-width="1.7" />
<polyline points="629.3,101.2 629.3,176.5" fill="none" stroke="#0b161b" stroke-width="1.6" />
<polyline points="789.5,378.8 789.6,809.0" fill="none" stroke="#0b161b" stroke-width="1.6" />
<polyline points="781.5,383.0 781.7,813.6" fill="none" stroke="#0b161b" stroke-width="1.4" />
<polyline points="461.8,188.7 469.4,193.2" fill="none" stroke="#0b161b" stroke-width="1.2" />
<g clip-path="url(#cModel)">
<g transform="translate(168,-97)">
<path d="M673.3,329.3 C675.0,330.5 679.4,333.2 683.3,336.7 C687.2,340.1 691.7,344.4 696.7,350.0 C701.7,355.6 707.8,362.8 713.3,370.0 C718.8,377.2 725.0,385.0 730.0,393.3 C735.0,401.6 739.7,411.1 743.3,420.0 C746.9,428.9 750.0,438.4 751.7,446.7 C753.4,455.0 753.8,462.3 753.5,470.0 C753.2,477.7 751.8,486.3 750.0,493.0 C748.2,499.7 745.8,504.3 743.0,510.0 C740.2,515.7 736.3,522.0 733.0,527.0 C729.7,532.0 724.8,535.0 723.0,540.0 C721.2,545.0 722.5,549.2 722.0,557.0 C721.5,564.8 720.8,576.5 720.0,587.0 C719.2,597.5 718.7,610.0 717.0,620.0 C715.3,630.0 713.2,639.8 710.0,647.0 C706.8,654.2 702.5,659.3 698.0,663.0 C693.5,666.7 688.8,668.2 683.0,669.0 C677.2,669.8 670.7,669.5 663.0,668.0 C655.3,666.5 645.8,663.5 637.0,660.0 C628.2,656.5 618.3,652.0 610.0,647.0 C601.7,642.0 594.2,636.2 587.0,630.0 C579.8,623.8 573.2,617.2 567.0,610.0 C560.8,602.8 554.8,595.3 550.0,587.0 C545.2,578.7 541.3,569.5 538.0,560.0 C534.7,550.5 532.1,539.5 530.0,530.0 C527.9,520.5 526.2,511.7 525.3,503.0 C524.3,494.3 524.2,486.5 524.3,478.0 C524.4,469.5 525.3,459.7 525.8,452.0 C526.2,444.3 527.4,438.4 527.0,432.0 C526.6,425.6 525.6,420.3 523.3,413.3 C521.0,406.3 516.6,398.3 513.3,390.0 C510.0,381.7 506.4,371.6 503.3,363.3 C500.2,355.0 497.1,347.8 495.0,340.0 C492.9,332.2 491.2,323.4 490.7,316.7 C490.1,310.0 490.4,305.6 491.7,300.0 C493.0,294.4 494.7,288.3 498.3,283.3 C501.9,278.3 507.5,273.1 513.3,270.0 C519.1,266.9 526.6,265.8 533.3,265.0 C540.0,264.2 547.5,264.4 553.3,265.0 C559.1,265.6 565.1,266.9 568.3,268.3 C571.5,269.7 572.7,271.1 572.7,273.3 C572.7,275.5 570.0,278.4 568.3,281.7 C566.6,285.0 563.8,289.7 562.7,293.3 C561.6,296.9 561.3,300.2 561.7,303.3 C562.1,306.4 563.5,309.6 565.0,311.7 C566.5,313.8 572.4,314.3 571.0,316.0 C569.6,317.7 559.1,320.8 556.7,321.7 C554.8,323.4 548.1,327.5 545.0,331.7 C541.9,335.9 539.4,341.4 538.3,346.7 C537.2,352.0 537.2,357.2 538.3,363.3 C539.4,369.4 541.9,376.6 545.0,383.3 C548.1,390.0 552.0,396.6 556.7,403.3 C561.4,410.0 566.6,417.2 573.3,423.3 C580.0,429.4 588.9,434.7 596.7,440.0 C604.5,445.3 612.2,450.3 620.0,455.0 C627.8,459.7 635.5,464.1 643.3,468.3 C651.1,472.5 659.5,476.9 666.7,480.0 C673.9,483.1 681.2,486.1 686.7,486.7 C692.2,487.2 696.7,486.1 700.0,483.3 C703.3,480.5 705.3,475.6 706.7,470.0 C708.1,464.4 708.9,456.7 708.3,450.0 C707.7,443.3 705.2,436.7 703.3,430.0 C701.4,423.3 698.9,416.1 696.7,410.0 C694.5,403.9 692.2,397.8 690.0,393.3 C687.8,388.9 686.2,386.1 683.3,383.3 C680.4,380.5 672.1,377.5 672.7,376.7 C673.3,375.9 684.4,378.0 686.7,378.3 C686.4,376.4 686.1,370.9 685.0,366.7 C683.9,362.5 681.7,357.8 680.0,353.3 C678.3,348.9 676.1,344.0 675.0,340.0 C673.9,336.0 673.6,331.1 673.3,329.3 Z" fill="none" stroke="#68c6f1" stroke-width="1.6" />
<ellipse cx="573" cy="531" rx="24.5" ry="41.5" transform="rotate(-16 573 531)" fill="none" stroke="#68c6f1" stroke-width="1.65"/>
<ellipse cx="671" cy="587.5" rx="24.5" ry="40.5" transform="rotate(-16 671 587.5)" fill="none" stroke="#68c6f1" stroke-width="1.65"/>
<ellipse cx="621" cy="567" rx="1.6" ry="2.6" transform="rotate(-16 621 567)" fill="none" stroke="#68c6f1" stroke-width="1.1"/>
</g>
<path d="M673.3,329.3 C675.0,330.5 679.4,333.2 683.3,336.7 C687.2,340.1 691.7,344.4 696.7,350.0 C701.7,355.6 707.8,362.8 713.3,370.0 C718.8,377.2 725.0,385.0 730.0,393.3 C735.0,401.6 739.7,411.1 743.3,420.0 C746.9,428.9 750.0,438.4 751.7,446.7 C753.4,455.0 753.8,462.3 753.5,470.0 C753.2,477.7 751.8,486.3 750.0,493.0 C748.2,499.7 745.8,504.3 743.0,510.0 C740.2,515.7 736.3,522.0 733.0,527.0 C729.7,532.0 724.8,535.0 723.0,540.0 C721.2,545.0 722.5,549.2 722.0,557.0 C721.5,564.8 720.8,576.5 720.0,587.0 C719.2,597.5 718.7,610.0 717.0,620.0 C715.3,630.0 713.2,639.8 710.0,647.0 C706.8,654.2 702.5,659.3 698.0,663.0 C693.5,666.7 688.8,668.2 683.0,669.0 C677.2,669.8 670.7,669.5 663.0,668.0 C655.3,666.5 645.8,663.5 637.0,660.0 C628.2,656.5 618.3,652.0 610.0,647.0 C601.7,642.0 594.2,636.2 587.0,630.0 C579.8,623.8 573.2,617.2 567.0,610.0 C560.8,602.8 554.8,595.3 550.0,587.0 C545.2,578.7 541.3,569.5 538.0,560.0 C534.7,550.5 532.1,539.5 530.0,530.0 C527.9,520.5 526.2,511.7 525.3,503.0 C524.3,494.3 524.2,486.5 524.3,478.0 C524.4,469.5 525.3,459.7 525.8,452.0 C526.2,444.3 527.4,438.4 527.0,432.0 C526.6,425.6 525.6,420.3 523.3,413.3 C521.0,406.3 516.6,398.3 513.3,390.0 C510.0,381.7 506.4,371.6 503.3,363.3 C500.2,355.0 497.1,347.8 495.0,340.0 C492.9,332.2 491.2,323.4 490.7,316.7 C490.1,310.0 490.4,305.6 491.7,300.0 C493.0,294.4 494.7,288.3 498.3,283.3 C501.9,278.3 507.5,273.1 513.3,270.0 C519.1,266.9 526.6,265.8 533.3,265.0 C540.0,264.2 547.5,264.4 553.3,265.0 C559.1,265.6 565.1,266.9 568.3,268.3 C571.5,269.7 572.7,271.1 572.7,273.3 C572.7,275.5 570.0,278.4 568.3,281.7 C566.6,285.0 563.8,289.7 562.7,293.3 C561.6,296.9 561.3,300.2 561.7,303.3 C562.1,306.4 563.5,309.6 565.0,311.7 C566.5,313.8 572.4,314.3 571.0,316.0 C569.6,317.7 559.1,320.8 556.7,321.7 C554.8,323.4 548.1,327.5 545.0,331.7 C541.9,335.9 539.4,341.4 538.3,346.7 C537.2,352.0 537.2,357.2 538.3,363.3 C539.4,369.4 541.9,376.6 545.0,383.3 C548.1,390.0 552.0,396.6 556.7,403.3 C561.4,410.0 566.6,417.2 573.3,423.3 C580.0,429.4 588.9,434.7 596.7,440.0 C604.5,445.3 612.2,450.3 620.0,455.0 C627.8,459.7 635.5,464.1 643.3,468.3 C651.1,472.5 659.5,476.9 666.7,480.0 C673.9,483.1 681.2,486.1 686.7,486.7 C692.2,487.2 696.7,486.1 700.0,483.3 C703.3,480.5 705.3,475.6 706.7,470.0 C708.1,464.4 708.9,456.7 708.3,450.0 C707.7,443.3 705.2,436.7 703.3,430.0 C701.4,423.3 698.9,416.1 696.7,410.0 C694.5,403.9 692.2,397.8 690.0,393.3 C687.8,388.9 686.2,386.1 683.3,383.3 C680.4,380.5 672.1,377.5 672.7,376.7 C673.3,375.9 684.4,378.0 686.7,378.3 C686.4,376.4 686.1,370.9 685.0,366.7 C683.9,362.5 681.7,357.8 680.0,353.3 C678.3,348.9 676.1,344.0 675.0,340.0 C673.9,336.0 673.6,331.1 673.3,329.3 Z" fill="none" stroke="#68c6f1" stroke-width="1.7" />
<ellipse cx="573" cy="531" rx="24.5" ry="41.5" transform="rotate(-16 573 531)" fill="none" stroke="#68c6f1" stroke-width="1.65"/>
<ellipse cx="671" cy="587.5" rx="24.5" ry="40.5" transform="rotate(-16 671 587.5)" fill="none" stroke="#68c6f1" stroke-width="1.65"/>
<ellipse cx="621" cy="567" rx="1.6" ry="2.6" transform="rotate(-16 621 567)" fill="none" stroke="#68c6f1" stroke-width="1.1"/>
<ellipse cx="499.5" cy="300.5" rx="3.3" ry="5.5" transform="rotate(-25 499.5 300.5)" fill="none" stroke="#1d566b" stroke-width="1.1"/>
<ellipse cx="507" cy="304.5" rx="3.3" ry="5.5" transform="rotate(-25 507 304.5)" fill="none" stroke="#1d566b" stroke-width="1.1"/>
<ellipse cx="541.5" cy="276" rx="3.3" ry="5.5" transform="rotate(-25 541.5 276)" fill="none" stroke="#1d566b" stroke-width="1.1"/>
<ellipse cx="549.3" cy="279.5" rx="3.3" ry="5.5" transform="rotate(-25 549.3 279.5)" fill="none" stroke="#1d566b" stroke-width="1.1"/>
<ellipse cx="819.4" cy="484.9" rx="3.2" ry="5.4" transform="rotate(-20 819.4 484.9)" fill="none" stroke="#173a47" stroke-width="1"/>
<ellipse cx="827.9" cy="489.1" rx="3.2" ry="5.4" transform="rotate(-20 827.9 489.1)" fill="none" stroke="#173a47" stroke-width="1"/>
<ellipse cx="835.7" cy="493" rx="3.2" ry="5.4" transform="rotate(-20 835.7 493)" fill="none" stroke="#173a47" stroke-width="1"/>
<ellipse cx="860.9" cy="460.4" rx="3.2" ry="5.4" transform="rotate(-20 860.9 460.4)" fill="none" stroke="#173a47" stroke-width="1"/>
<ellipse cx="869.4" cy="464.7" rx="3.2" ry="5.4" transform="rotate(-20 869.4 464.7)" fill="none" stroke="#173a47" stroke-width="1"/>
<ellipse cx="877.4" cy="468.9" rx="3.2" ry="5.4" transform="rotate(-20 877.4 468.9)" fill="none" stroke="#173a47" stroke-width="1"/>
<path d="M922.7,520.8 C926.7,520.6 932.2,521.4 935.9,523.8 C939.5,526.2 942.4,530.1 944.6,535.4 C946.8,540.7 948.3,548.5 949.0,555.8 C949.7,563.1 949.5,571.4 949.0,579.2 C948.5,587.0 947.7,594.7 946.0,602.5 C944.3,610.3 941.9,618.1 938.8,625.9 C935.6,633.7 932.0,641.4 927.1,649.2 C922.2,657.0 915.9,665.7 909.6,672.5 C903.3,679.3 896.5,685.1 889.2,690.0 C881.9,694.9 873.1,699.3 865.8,701.7 C858.5,704.1 851.7,705.3 845.4,704.6 C839.1,703.9 832.8,700.7 827.9,697.3 C823.0,693.9 819.2,689.8 816.3,684.2 C813.4,678.6 811.6,671.1 810.4,663.8 C809.2,656.5 808.8,648.2 809.0,640.4 C809.2,632.6 810.2,624.4 811.9,617.1 C813.6,609.8 816.1,603.5 819.2,596.7 C822.4,589.9 826.7,582.4 830.8,576.3 C834.9,570.2 839.8,564.2 844.0,560.2 C848.2,556.2 851.7,555.0 856.0,552.5 C860.3,550.0 865.2,547.6 870.0,545.0 C874.8,542.4 880.0,539.5 885.0,537.0 C890.0,534.5 895.5,532.0 900.0,530.0 C904.5,528.0 908.2,526.5 912.0,525.0 C915.8,523.5 918.7,521.0 922.7,520.8 Z" fill="none" stroke="#68c6f1" stroke-width="1.65" />
<ellipse cx="845.4" cy="668" rx="19.5" ry="28.5" transform="rotate(18 845.4 668)" fill="none" stroke="#68c6f1" stroke-width="1.65"/>
<ellipse cx="912.8" cy="628.5" rx="17" ry="34" transform="rotate(24 912.8 628.5)" fill="none" stroke="#68c6f1" stroke-width="1.65"/>
<ellipse cx="867.3" cy="558.8" rx="40" ry="4.2" transform="rotate(-49.4 867.3 558.8)" fill="none" stroke="#68c6f1" stroke-width="1.4"/>
<ellipse cx="864" cy="563" rx="33" ry="3.6" transform="rotate(-52 864 563)" fill="none" stroke="#68c6f1" stroke-width="1.3"/>
<path d="M889.2,536.9 C892.0,535.0 894.0,533.2 897.9,532.5 C901.8,531.8 908.6,532.0 912.5,532.5 C916.4,533.0 918.9,533.7 921.3,535.4 C923.7,537.1 926.4,539.8 927.1,542.7 C927.8,545.6 927.1,549.7 925.6,552.9 C924.1,556.1 921.1,559.5 918.4,561.7 C915.7,563.9 912.3,565.8 909.6,566.0 C906.9,566.2 904.2,564.8 902.3,563.1 C900.3,561.4 898.9,558.2 897.9,555.8 C896.9,553.4 898.0,549.2 896.5,548.5 C895.0,547.8 891.4,551.2 889.2,551.5 C887.0,551.8 884.7,551.2 883.3,550.0 C881.9,548.8 880.0,546.2 881.0,544.0 C882.0,541.8 886.4,538.8 889.2,536.9 Z" fill="none" stroke="#68c6f1" stroke-width="1.4" />
<ellipse cx="900.3" cy="522.3" rx="2.6" ry="2.6" transform="rotate(0 900.3 522.3)" fill="none" stroke="#68c6f1" stroke-width="1.3"/>
<ellipse cx="914" cy="517.9" rx="6.5" ry="9" transform="rotate(32 914 517.9)" fill="none" stroke="#68c6f1" stroke-width="1.4"/>
<ellipse cx="925" cy="523.5" rx="4" ry="6" transform="rotate(-30 925 523.5)" fill="none" stroke="#68c6f1" stroke-width="1.3"/>
</g>
<g clip-path="url(#cModel)">
<polygon points="515.2,534.9 568.6,504.1 576.6,508.7 576.6,517.7 523.2,548.5 515.2,543.9" fill="rgba(20,60,80,0.16)" stroke="none" stroke-width="1" />
<polygon points="515.2,534.9 568.6,504.1 576.6,508.7 523.2,539.5" fill="rgba(20,60,80,0.16)" stroke="none" stroke-width="1" />
<polyline points="515.2,534.9 568.6,504.1 576.6,508.7 523.2,539.5 515.2,534.9" fill="none" stroke="#16333f" stroke-width="0.9" />
<polyline points="523.2,539.5 523.2,548.5 576.6,517.7 576.6,508.7" fill="none" stroke="#16333f" stroke-width="0.9" />
<polyline points="515.2,534.9 515.2,543.9 523.2,548.5" fill="none" stroke="#16333f" stroke-width="0.9" />
<polygon points="701.8,509.3 765.5,546.1 765.5,555.3 757.1,560.0 693.4,523.2 693.4,514.0" fill="rgba(20,60,80,0.16)" stroke="none" stroke-width="1" />
<polygon points="701.8,509.3 765.5,546.1 757.1,550.8 693.4,514.0" fill="rgba(20,60,80,0.16)" stroke="none" stroke-width="1" />
<polyline points="701.8,509.3 765.5,546.1 757.1,550.8 693.4,514.0 701.8,509.3" fill="none" stroke="#1d4757" stroke-width="0.9" />
<polyline points="693.4,514.0 693.4,523.2 757.1,560.0 757.1,550.8" fill="none" stroke="#1d4757" stroke-width="0.9" />
<polyline points="765.5,546.1 765.5,555.3 757.1,560.0" fill="none" stroke="#1d4757" stroke-width="0.9" />
<polygon points="829.0,581.8 892.7,618.6 892.7,627.8 884.3,632.5 820.6,595.7 820.6,586.5" fill="rgba(20,60,80,0.16)" stroke="none" stroke-width="1" />
<polygon points="829.0,581.8 892.7,618.6 884.3,623.3 820.6,586.5" fill="rgba(20,60,80,0.16)" stroke="none" stroke-width="1" />
<polyline points="829.0,581.8 892.7,618.6 884.3,623.3 820.6,586.5 829.0,581.8" fill="none" stroke="#1d4757" stroke-width="0.9" />
<polyline points="820.6,586.5 820.6,595.7 884.3,632.5 884.3,623.3" fill="none" stroke="#1d4757" stroke-width="0.9" />
<polyline points="892.7,618.6 892.7,627.8 884.3,632.5" fill="none" stroke="#1d4757" stroke-width="0.9" />
<polygon points="526.0,611.7 533.5,607.5 597.5,644.5 597.5,652.8 590.0,657.0 526.0,620.0" fill="#3c5d6c" stroke="none" stroke-width="1" />
<polygon points="590.0,648.7 597.5,644.5 597.5,652.8 590.0,657.0" fill="#2f4f5e" stroke="none" stroke-width="1" />
<polyline points="526.0,611.7 590.0,648.7" fill="none" stroke="#16333f" stroke-width="1" />
<polyline points="526.0,611.7 533.5,607.5 597.5,644.5 590.0,648.7" fill="none" stroke="#16333f" stroke-width="1" />
<polyline points="597.5,644.5 597.5,652.8 590.0,657.0 590.0,648.7" fill="none" stroke="#16333f" stroke-width="1" />
<polyline points="526.0,611.7 526.0,620.0 590.0,657.0" fill="none" stroke="#0b161b" stroke-width="1.3" />
<polygon points="653.5,683.5 661.0,679.3 725.0,716.3 725.0,724.9 717.5,729.1 653.5,692.1" fill="#3c5d6c" stroke="none" stroke-width="1" />
<polygon points="717.5,720.5 725.0,716.3 725.0,724.9 717.5,729.1" fill="#2f4f5e" stroke="none" stroke-width="1" />
<polyline points="653.5,683.5 717.5,720.5" fill="none" stroke="#16333f" stroke-width="1" />
<polyline points="653.5,683.5 661.0,679.3 725.0,716.3 717.5,720.5" fill="none" stroke="#16333f" stroke-width="1" />
<polyline points="725.0,716.3 725.0,724.9 717.5,729.1 717.5,720.5" fill="none" stroke="#16333f" stroke-width="1" />
<polyline points="653.5,683.5 653.5,692.1 717.5,729.1" fill="none" stroke="#0b161b" stroke-width="1.3" />
<polygon points="842.3,724.5 896.0,693.5 904.8,698.5 904.8,706.0 851.0,737.0 842.3,732.0" fill="#3c5d6c" stroke="none" stroke-width="1" />
<polygon points="842.3,724.5 896.0,693.5 904.8,698.5 851.0,729.5" fill="#4b6b79" stroke="none" stroke-width="1" />
<polyline points="842.3,724.5 896.0,693.5 904.8,698.5 851.0,729.5 842.3,724.5" fill="none" stroke="#16333f" stroke-width="0.9" />
<polyline points="851.0,729.5 851.0,737.0 904.8,706.0 904.8,698.5" fill="none" stroke="#16333f" stroke-width="0.9" />
<polyline points="842.3,724.5 842.3,732.0 851.0,737.0" fill="none" stroke="#16333f" stroke-width="0.9" />
</g>
<polygon points="773.5,466.0 781.5,461.5 781.5,541.5 773.5,546.0" fill="#3f5d6b" stroke="none" stroke-width="1" />
<polyline points="773.5,466.0 773.5,546.0 781.5,550.5" fill="none" stroke="#16333f" stroke-width="1" />
<polyline points="773.5,466.0 781.5,461.5 789.5,466.0 781.5,470.5 773.5,466.0" fill="none" stroke="#16333f" stroke-width="0.9" />
<polyline points="773.5,546.0 781.5,541.5 789.5,546.0" fill="none" stroke="#16333f" stroke-width="0.9" />
<polygon points="773.5,641.0 781.5,636.5 781.5,719.5 773.5,724.0" fill="#3f5d6b" stroke="none" stroke-width="1" />
<polyline points="773.5,641.0 773.5,724.0 781.5,728.5" fill="none" stroke="#16333f" stroke-width="1" />
<polyline points="773.5,641.0 781.5,636.5 789.5,641.0 781.5,645.5 773.5,641.0" fill="none" stroke="#16333f" stroke-width="0.9" />
<polyline points="773.5,724.0 781.5,719.5 789.5,724.0" fill="none" stroke="#16333f" stroke-width="0.9" />
<polyline points="789.5,558.5 797.3,554.0 789.5,549.5" fill="none" stroke="#16333f" stroke-width="0.9" />
<polyline points="789.5,733.5 797.3,729.0 789.5,724.5" fill="none" stroke="#16333f" stroke-width="0.9" />
<polygon points="943.3,364.5 951.0,369.2 951.0,458.0 943.3,452.2" fill="#2a4a57" stroke="none" stroke-width="1" />
<polygon points="951.0,369.2 957.9,374.0 957.9,461.9 951.0,458.0" fill="#4e6e7b" stroke="none" stroke-width="1" />
<polygon points="957.9,374.0 965.7,371.0 965.7,458.0 957.9,461.9" fill="#587888" stroke="none" stroke-width="1" />
<polygon points="951.0,369.2 958.8,366.2 965.7,371.0 957.9,374.0" fill="#8aa2ad" stroke="none" stroke-width="1" />
<polyline points="943.3,364.5 943.3,452.2 951.0,458.0 957.9,461.9 965.7,458.0 965.7,371.0 958.8,366.2 951.0,369.2 943.3,364.5" fill="none" stroke="#16333f" stroke-width="1" />
<polyline points="951.0,369.2 957.9,374.0 965.7,371.0" fill="none" stroke="#16333f" stroke-width="1" />
<polyline points="951.0,369.2 951.0,458.0" fill="none" stroke="#16333f" stroke-width="1" />
<polyline points="957.9,374.0 957.9,461.9" fill="none" stroke="#0b161b" stroke-width="1.5" />
<polygon points="949.6,541.4 957.6,546.7 957.6,633.5 949.6,628.1" fill="#a3b5be" stroke="none" stroke-width="1" />
<polygon points="957.6,546.7 966.4,544.0 966.4,629.5 957.6,633.5" fill="#b9c8d0" stroke="none" stroke-width="1" />
<polygon points="949.6,541.4 958.6,538.6 966.4,544.0 957.6,546.7" fill="#c6d3da" stroke="none" stroke-width="1" />
<polyline points="942.4,537.0 942.4,622.8 949.6,628.1 957.6,633.5 966.4,629.5 966.4,544.0 958.6,538.6 949.6,541.4" fill="none" stroke="#16333f" stroke-width="1" />
<polyline points="949.6,541.4 957.6,546.7 966.4,544.0" fill="none" stroke="#16333f" stroke-width="1" />
<polyline points="949.6,541.4 949.6,628.1" fill="none" stroke="#16333f" stroke-width="1" />
<polyline points="957.6,546.7 957.6,633.5" fill="none" stroke="#0b161b" stroke-width="1.5" />
<polyline points="966.4,544.0 966.4,629.5 957.6,633.5" fill="none" stroke="#0b161b" stroke-width="1.3" />
<polyline points="965.7,371.0 965.7,458.0 957.9,461.9" fill="none" stroke="#0b161b" stroke-width="1.3" />
</svg>
<div id="hdr"><svg class="ic" style="left:4px;top:7px" width="12" height="9" viewBox="0 0 12 9"><path d="M5.4,0.6 L5.4,8.4 L0.6,4.5 Z M11,0.6 L11,8.4 L6.2,4.5 Z" fill="#333"/></svg><div class="t">BROWSER</div><svg class="ic" style="left:276.5px;top:5.4px" width="12" height="12" viewBox="0 0 12 12"><circle cx="6" cy="6" r="4.6" fill="#2b2b2b"/><rect x="3.3" y="5.2" width="5.4" height="1.5" fill="#f0f0f0"/></svg><div class="ic" style="left:293.6px;top:6px;width:1.2px;height:10.6px;background:#666"></div><div class="ic" style="left:295.8px;top:8px;width:1.2px;height:6.8px;background:#999"></div></div>
<div class="row" style="left:40px;top:33.300000000000004px;width:164px"></div>
<svg class="ic" style="left:20.5px;top:36.6px" width="13" height="13" viewBox="0 0 13 13"><defs><linearGradient id="te43" x1="0" y1="1" x2="1" y2="0.3"><stop offset="0" stop-color="#222"/><stop offset="1" stop-color="#aaa"/></linearGradient></defs><path d="M0.8,12 L11.5,12 L11.5,1.3 Z" fill="url(#te43)" stroke="#222" stroke-width="1" stroke-linejoin="round"/></svg>
<svg class="ic" style="left:43px;top:37.4px" width="17" height="12" viewBox="0 0 17 12"><path d="M0.5,6 Q4,1.2 8.5,1.2 Q13,1.2 16.5,6 Q13,10.8 8.5,10.8 Q4,10.8 0.5,6 Z" fill="#8d8d8d"/><circle cx="8.5" cy="6" r="3.2" fill="#f0f0f0"/><circle cx="8.5" cy="6" r="2" fill="#8d8d8d"/></svg>
<div class="sel"></div>
<svg class="ic" style="left:67.7px;top:35px" width="17" height="16" viewBox="0 0 17 16"><path d="M0.6,3.7 L3,0.8 L9.1,0.8 L9.7,1.6 L9.7,6.2 L15,6.2 L15.9,7.6 L15.9,12 L13,15.1 L1.5,15.1 L0.6,14 Z" fill="#f6f6f8" stroke="#2a2a33" stroke-width="1.1" stroke-linejoin="round"/><path d="M1.8,4.6 L6,4.6 L6,8.6 L1.8,8.6 Z M1.8,9.6 L6,9.6 L6,14 L1.8,14 Z M8,10 L12.4,10 L12.4,14 L8,14 Z" fill="#dcdfe7"/><path d="M13.2,9.6 L15,7.8 L15,11.6 L13.2,13.6 Z M7,4 L8.6,2 L8.6,6 L7,8 Z" fill="#e6e8ee"/><path d="M9.7,6.2 L6.8,9.4 L6.8,15.1" stroke="#2a2a33" stroke-width="1" fill="none"/></svg>
<div class="selt">Ensamble v7</div>
<svg class="ic" style="left:182px;top:36.2px" width="15" height="15" viewBox="0 0 15 15"><circle cx="7.4" cy="7.3" r="6" fill="#fff" stroke="#222" stroke-width="1.2"/><circle cx="7.4" cy="7.3" r="2.7" fill="#222"/></svg>
<div class="row" style="left:58px;top:57.300000000000004px;width:134px"></div>
<svg class="ic" style="left:39.2px;top:59.400000000000006px" width="12" height="16" viewBox="0 0 12 16"><defs><linearGradient id="tg67" x1="0" y1="0" x2="1" y2="0"><stop offset="0" stop-color="#fff"/><stop offset="1" stop-color="#c8c8c8"/></linearGradient></defs><path d="M1.7,2 L1.7,14 L10,8 Z" fill="url(#tg67)" stroke="#2a2a2a" stroke-width="1.4" stroke-linejoin="round"/></svg>
<svg class="ic" style="left:60.4px;top:58.7px" width="17.4" height="17.4" viewBox="0 0 17.4 17.4"><rect x="7" y="0" width="3.4" height="4" rx="0.6" fill="#8c8c8c" transform="rotate(0 8.7 8.7)"/><rect x="7" y="0" width="3.4" height="4" rx="0.6" fill="#8c8c8c" transform="rotate(45 8.7 8.7)"/><rect x="7" y="0" width="3.4" height="4" rx="0.6" fill="#8c8c8c" transform="rotate(90 8.7 8.7)"/><rect x="7" y="0" width="3.4" height="4" rx="0.6" fill="#8c8c8c" transform="rotate(135 8.7 8.7)"/><rect x="7" y="0" width="3.4" height="4" rx="0.6" fill="#8c8c8c" transform="rotate(180 8.7 8.7)"/><rect x="7" y="0" width="3.4" height="4" rx="0.6" fill="#8c8c8c" transform="rotate(225 8.7 8.7)"/><rect x="7" y="0" width="3.4" height="4" rx="0.6" fill="#8c8c8c" transform="rotate(270 8.7 8.7)"/><rect x="7" y="0" width="3.4" height="4" rx="0.6" fill="#8c8c8c" transform="rotate(315 8.7 8.7)"/><circle cx="8.7" cy="8.7" r="6" fill="#8c8c8c"/><circle cx="8.7" cy="8.7" r="2.5" fill="#f0f0f0"/></svg>
<div class="lb" style="left:91.2px;top:59.900000000000006px">Document Settings</div>
<div class="row" style="left:58px;top:81.3px;width:110px"></div>
<svg class="ic" style="left:39.2px;top:83.4px" width="12" height="16" viewBox="0 0 12 16"><defs><linearGradient id="tg91" x1="0" y1="0" x2="1" y2="0"><stop offset="0" stop-color="#fff"/><stop offset="1" stop-color="#c8c8c8"/></linearGradient></defs><path d="M1.7,2 L1.7,14 L10,8 Z" fill="url(#tg91)" stroke="#2a2a2a" stroke-width="1.4" stroke-linejoin="round"/></svg>
<svg class="ic" style="left:60.7px;top:84.0px" width="17" height="14" viewBox="0 0 17 14"><path d="M0.3,0.6 L7.5,0.6 L8.8,2.4 L8.8,2.9 L0.3,2.9 Z" fill="#8c8c8c"/><path d="M0.3,3.3 L9.2,3.3 L10.2,2.2 L16.3,2.2 L16.3,13.2 L0.3,13.2 Z" fill="#8c8c8c"/></svg>
<div class="lb" style="left:91.2px;top:83.9px">Named Views</div>
<div class="row" style="left:58px;top:105.1px;width:95px"></div>
<svg class="ic" style="left:39.2px;top:107px" width="12" height="16" viewBox="0 0 12 16"><defs><linearGradient id="tg115" x1="0" y1="0" x2="1" y2="0"><stop offset="0" stop-color="#fff"/><stop offset="1" stop-color="#c8c8c8"/></linearGradient></defs><path d="M1.7,2 L1.7,14 L10,8 Z" fill="url(#tg115)" stroke="#2a2a2a" stroke-width="1.4" stroke-linejoin="round"/></svg>
<svg class="ic" style="left:60.5px;top:109px" width="17" height="12" viewBox="0 0 17 12"><path d="M0.5,6 Q4,1.2 8.5,1.2 Q13,1.2 16.5,6 Q13,10.8 8.5,10.8 Q4,10.8 0.5,6 Z" fill="#d0d0d0"/><circle cx="8.5" cy="6" r="3.2" fill="#f0f0f0"/><circle cx="8.5" cy="6" r="2" fill="#d0d0d0"/><path d="M3.2,0.6 L12.4,11.6" stroke="#f0f0f0" stroke-width="2.6"/><path d="M4.2,0.4 L13.2,11.2" stroke="#d0d0d0" stroke-width="1.2"/></svg>
<svg class="ic" style="left:85.8px;top:107.8px" width="17" height="14" viewBox="0 0 17 14"><path d="M0.3,0.6 L7.5,0.6 L8.8,2.4 L8.8,2.9 L0.3,2.9 Z" fill="#8c8c8c"/><path d="M0.3,3.3 L9.2,3.3 L10.2,2.2 L16.3,2.2 L16.3,13.2 L0.3,13.2 Z" fill="#8c8c8c"/></svg>
<div class="lb" style="left:116.3px;top:107.7px">Origin</div>
<div class="row" style="left:58px;top:129.1px;width:95px"></div>
<svg class="ic" style="left:39.2px;top:131px" width="12" height="16" viewBox="0 0 12 16"><defs><linearGradient id="tg139" x1="0" y1="0" x2="1" y2="0"><stop offset="0" stop-color="#fff"/><stop offset="1" stop-color="#c8c8c8"/></linearGradient></defs><path d="M1.7,2 L1.7,14 L10,8 Z" fill="url(#tg139)" stroke="#2a2a2a" stroke-width="1.4" stroke-linejoin="round"/></svg>
<svg class="ic" style="left:60.5px;top:133px" width="17" height="12" viewBox="0 0 17 12"><path d="M0.5,6 Q4,1.2 8.5,1.2 Q13,1.2 16.5,6 Q13,10.8 8.5,10.8 Q4,10.8 0.5,6 Z" fill="#d0d0d0"/><circle cx="8.5" cy="6" r="3.2" fill="#f0f0f0"/><circle cx="8.5" cy="6" r="2" fill="#d0d0d0"/><path d="M3.2,0.6 L12.4,11.6" stroke="#f0f0f0" stroke-width="2.6"/><path d="M4.2,0.4 L13.2,11.2" stroke="#d0d0d0" stroke-width="1.2"/></svg>
<svg class="ic" style="left:85.8px;top:131.8px" width="17" height="14" viewBox="0 0 17 14"><path d="M0.3,0.6 L7.5,0.6 L8.8,2.4 L8.8,2.9 L0.3,2.9 Z" fill="#8c8c8c"/><path d="M0.3,3.3 L9.2,3.3 L10.2,2.2 L16.3,2.2 L16.3,13.2 L0.3,13.2 Z" fill="#8c8c8c"/></svg>
<div class="lb" style="left:116.3px;top:131.7px">Joints</div>
<div class="row" style="left:58px;top:153.1px;width:119px"></div>
<svg class="ic" style="left:39.2px;top:155px" width="12" height="16" viewBox="0 0 12 16"><defs><linearGradient id="tg163" x1="0" y1="0" x2="1" y2="0"><stop offset="0" stop-color="#fff"/><stop offset="1" stop-color="#c8c8c8"/></linearGradient></defs><path d="M1.7,2 L1.7,14 L10,8 Z" fill="url(#tg163)" stroke="#2a2a2a" stroke-width="1.4" stroke-linejoin="round"/></svg>
<svg class="ic" style="left:60.5px;top:157px" width="17" height="12" viewBox="0 0 17 12"><path d="M0.5,6 Q4,1.2 8.5,1.2 Q13,1.2 16.5,6 Q13,10.8 8.5,10.8 Q4,10.8 0.5,6 Z" fill="#d0d0d0"/><circle cx="8.5" cy="6" r="3.2" fill="#f0f0f0"/><circle cx="8.5" cy="6" r="2" fill="#d0d0d0"/><path d="M3.2,0.6 L12.4,11.6" stroke="#f0f0f0" stroke-width="2.6"/><path d="M4.2,0.4 L13.2,11.2" stroke="#d0d0d0" stroke-width="1.2"/></svg>
<svg class="ic" style="left:85.8px;top:155.8px" width="17" height="14" viewBox="0 0 17 14"><path d="M0.3,0.6 L7.5,0.6 L8.8,2.4 L8.8,2.9 L0.3,2.9 Z" fill="#8c8c8c"/><path d="M0.3,3.3 L9.2,3.3 L10.2,2.2 L16.3,2.2 L16.3,13.2 L0.3,13.2 Z" fill="#8c8c8c"/></svg>
<div class="lb" style="left:116.3px;top:155.7px">Canvases</div>
<div class="row" style="left:58px;top:177.1px;width:115px"></div>
<svg class="ic" style="left:38.6px;top:180px" width="13" height="13" viewBox="0 0 13 13"><defs><linearGradient id="te187" x1="0" y1="1" x2="1" y2="0.3"><stop offset="0" stop-color="#222"/><stop offset="1" stop-color="#aaa"/></linearGradient></defs><path d="M0.8,12 L11.5,12 L11.5,1.3 Z" fill="url(#te187)" stroke="#222" stroke-width="1" stroke-linejoin="round"/></svg>
<svg class="ic" style="left:60.5px;top:181px" width="17" height="12" viewBox="0 0 17 12"><path d="M0.5,6 Q4,1.2 8.5,1.2 Q13,1.2 16.5,6 Q13,10.8 8.5,10.8 Q4,10.8 0.5,6 Z" fill="#8d8d8d"/><circle cx="8.5" cy="6" r="3.2" fill="#f0f0f0"/><circle cx="8.5" cy="6" r="2" fill="#8d8d8d"/></svg>
<svg class="ic" style="left:85.8px;top:179.8px" width="17" height="14" viewBox="0 0 17 14"><path d="M0.3,0.6 L7.5,0.6 L8.8,2.4 L8.8,2.9 L0.3,2.9 Z" fill="#8c8c8c"/><path d="M0.3,3.3 L9.2,3.3 L10.2,2.2 L16.3,2.2 L16.3,13.2 L0.3,13.2 Z" fill="#8c8c8c"/></svg>
<div class="lb" style="left:116.3px;top:179.7px">Sketches</div>
<div class="row" style="left:76px;top:201.1px;width:106.5px"></div>
<svg class="ic" style="left:78.8px;top:205px" width="17" height="12" viewBox="0 0 17 12"><path d="M0.5,6 Q4,1.2 8.5,1.2 Q13,1.2 16.5,6 Q13,10.8 8.5,10.8 Q4,10.8 0.5,6 Z" fill="#8d8d8d"/><circle cx="8.5" cy="6" r="3.2" fill="#f0f0f0"/><circle cx="8.5" cy="6" r="2" fill="#8d8d8d"/></svg>
<svg class="ic" style="left:103.4px;top:202px" width="18" height="18" viewBox="0 0 18 18"><path d="M3.2,2.3 L13.4,2.3 M2,3.6 L2,13.6 M14.7,3.6 L14.7,8.6 M3.2,14.9 L8.6,14.9" stroke="#4a4a4a" stroke-width="1.1" fill="none"/><rect x="0.8" y="1.0999999999999999" width="2.4" height="2.4" fill="#3a3a3a"/><rect x="13.5" y="1.0999999999999999" width="2.4" height="2.4" fill="#3a3a3a"/><rect x="0.8" y="13.700000000000001" width="2.4" height="2.4" fill="#3a3a3a"/><rect x="10.4" y="12.2" width="6.2" height="4.6" fill="#eba3a3" stroke="#cf3030" stroke-width="1.1"/><path d="M11.2,14.5 L15.8,14.5" stroke="#cf3030" stroke-width="0.9"/><path d="M11.9,12 L11.9,10.8 A1.6,1.6 0 0 1 15.1,10.8 L15.1,12" fill="none" stroke="#cf3030" stroke-width="1.1"/></svg>
<div class="lb" style="left:134.3px;top:203.7px">Sketch1</div>
<div class="row" style="left:76px;top:225.1px;width:106.5px"></div>
<svg class="ic" style="left:78.8px;top:229px" width="17" height="12" viewBox="0 0 17 12"><path d="M0.5,6 Q4,1.2 8.5,1.2 Q13,1.2 16.5,6 Q13,10.8 8.5,10.8 Q4,10.8 0.5,6 Z" fill="#8d8d8d"/><circle cx="8.5" cy="6" r="3.2" fill="#f0f0f0"/><circle cx="8.5" cy="6" r="2" fill="#8d8d8d"/></svg>
<svg class="ic" style="left:103.4px;top:226px" width="18" height="18" viewBox="0 0 18 18"><path d="M3.2,2.3 L13.4,2.3 M2,3.6 L2,13.6 M14.7,3.6 L14.7,8.6 M3.2,14.9 L8.6,14.9" stroke="#4a4a4a" stroke-width="1.1" fill="none"/><rect x="0.8" y="1.0999999999999999" width="2.4" height="2.4" fill="#1b87e6"/><rect x="13.5" y="1.0999999999999999" width="2.4" height="2.4" fill="#1b87e6"/><rect x="0.8" y="13.700000000000001" width="2.4" height="2.4" fill="#1b87e6"/><path d="M10.6,15.2 L14.6,11.2 L16.4,13 L12.4,17 Z" fill="#f2b740"/><path d="M14.6,11.2 L15.5,10.3 A1.2,1.2 0 0 1 17.3,12.1 L16.4,13 Z" fill="#ee4a55"/><path d="M10.6,15.2 L12.4,17 L9.6,18 Z" fill="#555"/></svg>
<div class="lb" style="left:134.3px;top:227.7px">Sketch3</div>
<div class="row" style="left:58px;top:249.29999999999998px;width:148px"></div>
<svg class="ic" style="left:39.2px;top:251.2px" width="12" height="16" viewBox="0 0 12 16"><defs><linearGradient id="tg259" x1="0" y1="0" x2="1" y2="0"><stop offset="0" stop-color="#fff"/><stop offset="1" stop-color="#c8c8c8"/></linearGradient></defs><path d="M1.7,2 L1.7,14 L10,8 Z" fill="url(#tg259)" stroke="#2a2a2a" stroke-width="1.4" stroke-linejoin="round"/></svg>
<svg class="ic" style="left:60.5px;top:253.2px" width="17" height="12" viewBox="0 0 17 12"><path d="M0.5,6 Q4,1.2 8.5,1.2 Q13,1.2 16.5,6 Q13,10.8 8.5,10.8 Q4,10.8 0.5,6 Z" fill="#8d8d8d"/><circle cx="8.5" cy="6" r="3.2" fill="#f0f0f0"/><circle cx="8.5" cy="6" r="2" fill="#8d8d8d"/></svg>
<svg class="ic" style="left:85px;top:250.2px" width="18" height="18" viewBox="0 0 18 18"><path d="M1,4.8 L4.4,1 L16.4,1 L16.4,13 L13,16.8 L1,16.8 Z" fill="#fdfdfd" stroke="#2b2b2b" stroke-width="1.2" stroke-linejoin="round"/><path d="M2.2,6 L12,6 L12,15.6 L2.2,15.6 Z" fill="#d3d6de"/><path d="M12.8,5.4 L15.6,2.4 L15.6,12.6 L12.8,15.6 Z" fill="#c3c7d2"/></svg>
<svg class="ic" style="left:110px;top:250.2px" width="18" height="18" viewBox="0 0 18 18"><g fill="none" stroke="#333" stroke-width="2.3" stroke-linecap="round"><path d="M7.6,6.2 L10.2,3.6 A3,3 0 0 1 14.6,7.8 L12,10.4 A3,3 0 0 1 8.6,10.6"/><path d="M10.4,11.8 L7.8,14.4 A3,3 0 0 1 3.4,10.2 L6,7.6 A3,3 0 0 1 9.4,7.4"/></g></svg>
<div class="lb" style="left:141.3px;top:251.89999999999998px">Cara C v2:1</div>
<div class="row" style="left:58px;top:273.3px;width:191.5px"></div>
<svg class="ic" style="left:39.2px;top:275.2px" width="12" height="16" viewBox="0 0 12 16"><defs><linearGradient id="tg283" x1="0" y1="0" x2="1" y2="0"><stop offset="0" stop-color="#fff"/><stop offset="1" stop-color="#c8c8c8"/></linearGradient></defs><path d="M1.7,2 L1.7,14 L10,8 Z" fill="url(#tg283)" stroke="#2a2a2a" stroke-width="1.4" stroke-linejoin="round"/></svg>
<svg class="ic" style="left:60.5px;top:277.2px" width="17" height="12" viewBox="0 0 17 12"><path d="M0.5,6 Q4,1.2 8.5,1.2 Q13,1.2 16.5,6 Q13,10.8 8.5,10.8 Q4,10.8 0.5,6 Z" fill="#8d8d8d"/><circle cx="8.5" cy="6" r="3.2" fill="#f0f0f0"/><circle cx="8.5" cy="6" r="2" fill="#8d8d8d"/></svg>
<svg class="ic" style="left:85px;top:274.2px" width="18" height="18" viewBox="0 0 18 18"><path d="M1,4.8 L4.4,1 L16.4,1 L16.4,13 L13,16.8 L1,16.8 Z" fill="#fdfdfd" stroke="#2b2b2b" stroke-width="1.2" stroke-linejoin="round"/><path d="M2.2,6 L12,6 L12,15.6 L2.2,15.6 Z" fill="#d3d6de"/><path d="M12.8,5.4 L15.6,2.4 L15.6,12.6 L12.8,15.6 Z" fill="#c3c7d2"/></svg>
<svg class="ic" style="left:110px;top:274.2px" width="18" height="18" viewBox="0 0 18 18"><g fill="none" stroke="#333" stroke-width="2.3" stroke-linecap="round"><path d="M7.6,6.2 L10.2,3.6 A3,3 0 0 1 14.6,7.8 L12,10.4 A3,3 0 0 1 8.6,10.6"/><path d="M10.4,11.8 L7.8,14.4 A3,3 0 0 1 3.4,10.2 L6,7.6 A3,3 0 0 1 9.4,7.4"/></g></svg>
<div class="lb" style="left:141.3px;top:275.9px">Cara A - FabDig v6:1</div>
<div class="row" style="left:58px;top:297.3px;width:195.5px"></div>
<svg class="ic" style="left:39.2px;top:299.2px" width="12" height="16" viewBox="0 0 12 16"><defs><linearGradient id="tg307" x1="0" y1="0" x2="1" y2="0"><stop offset="0" stop-color="#fff"/><stop offset="1" stop-color="#c8c8c8"/></linearGradient></defs><path d="M1.7,2 L1.7,14 L10,8 Z" fill="url(#tg307)" stroke="#2a2a2a" stroke-width="1.4" stroke-linejoin="round"/></svg>
<svg class="ic" style="left:60.5px;top:301.2px" width="17" height="12" viewBox="0 0 17 12"><path d="M0.5,6 Q4,1.2 8.5,1.2 Q13,1.2 16.5,6 Q13,10.8 8.5,10.8 Q4,10.8 0.5,6 Z" fill="#8d8d8d"/><circle cx="8.5" cy="6" r="3.2" fill="#f0f0f0"/><circle cx="8.5" cy="6" r="2" fill="#8d8d8d"/></svg>
<svg class="ic" style="left:85px;top:298.2px" width="18" height="18" viewBox="0 0 18 18"><path d="M1,4.8 L4.4,1 L16.4,1 L16.4,13 L13,16.8 L1,16.8 Z" fill="#fdfdfd" stroke="#2b2b2b" stroke-width="1.2" stroke-linejoin="round"/><path d="M2.2,6 L12,6 L12,15.6 L2.2,15.6 Z" fill="#d3d6de"/><path d="M12.8,5.4 L15.6,2.4 L15.6,12.6 L12.8,15.6 Z" fill="#c3c7d2"/></svg>
<svg class="ic" style="left:110px;top:298.2px" width="18" height="18" viewBox="0 0 18 18"><g fill="none" stroke="#333" stroke-width="2.3" stroke-linecap="round"><path d="M7.6,6.2 L10.2,3.6 A3,3 0 0 1 14.6,7.8 L12,10.4 A3,3 0 0 1 8.6,10.6"/><path d="M10.4,11.8 L7.8,14.4 A3,3 0 0 1 3.4,10.2 L6,7.6 A3,3 0 0 1 9.4,7.4"/></g></svg>
<div class="lb" style="left:141.3px;top:299.9px">Cara A - FabDig v6:2</div>
<div class="row" style="left:58px;top:321.3px;width:152px"></div>
<svg class="ic" style="left:39.2px;top:323.2px" width="12" height="16" viewBox="0 0 12 16"><defs><linearGradient id="tg331" x1="0" y1="0" x2="1" y2="0"><stop offset="0" stop-color="#fff"/><stop offset="1" stop-color="#c8c8c8"/></linearGradient></defs><path d="M1.7,2 L1.7,14 L10,8 Z" fill="url(#tg331)" stroke="#2a2a2a" stroke-width="1.4" stroke-linejoin="round"/></svg>
<svg class="ic" style="left:60.5px;top:325.2px" width="17" height="12" viewBox="0 0 17 12"><path d="M0.5,6 Q4,1.2 8.5,1.2 Q13,1.2 16.5,6 Q13,10.8 8.5,10.8 Q4,10.8 0.5,6 Z" fill="#8d8d8d"/><circle cx="8.5" cy="6" r="3.2" fill="#f0f0f0"/><circle cx="8.5" cy="6" r="2" fill="#8d8d8d"/></svg>
<svg class="ic" style="left:85px;top:322.2px" width="18" height="18" viewBox="0 0 18 18"><path d="M1,4.8 L4.4,1 L16.4,1 L16.4,13 L13,16.8 L1,16.8 Z" fill="#fdfdfd" stroke="#2b2b2b" stroke-width="1.2" stroke-linejoin="round"/><path d="M2.2,6 L12,6 L12,15.6 L2.2,15.6 Z" fill="#d3d6de"/><path d="M12.8,5.4 L15.6,2.4 L15.6,12.6 L12.8,15.6 Z" fill="#c3c7d2"/></svg>
<svg class="ic" style="left:110px;top:322.2px" width="18" height="18" viewBox="0 0 18 18"><g fill="none" stroke="#333" stroke-width="2.3" stroke-linecap="round"><path d="M7.6,6.2 L10.2,3.6 A3,3 0 0 1 14.6,7.8 L12,10.4 A3,3 0 0 1 8.6,10.6"/><path d="M10.4,11.8 L7.8,14.4 A3,3 0 0 1 3.4,10.2 L6,7.6 A3,3 0 0 1 9.4,7.4"/></g></svg>
<div class="lb" style="left:141.3px;top:323.9px">Cara_B v3:1</div>
<div class="row" style="left:58px;top:345.3px;width:152px"></div>
<svg class="ic" style="left:39.2px;top:347.2px" width="12" height="16" viewBox="0 0 12 16"><defs><linearGradient id="tg355" x1="0" y1="0" x2="1" y2="0"><stop offset="0" stop-color="#fff"/><stop offset="1" stop-color="#c8c8c8"/></linearGradient></defs><path d="M1.7,2 L1.7,14 L10,8 Z" fill="url(#tg355)" stroke="#2a2a2a" stroke-width="1.4" stroke-linejoin="round"/></svg>
<svg class="ic" style="left:60.5px;top:349.2px" width="17" height="12" viewBox="0 0 17 12"><path d="M0.5,6 Q4,1.2 8.5,1.2 Q13,1.2 16.5,6 Q13,10.8 8.5,10.8 Q4,10.8 0.5,6 Z" fill="#8d8d8d"/><circle cx="8.5" cy="6" r="3.2" fill="#f0f0f0"/><circle cx="8.5" cy="6" r="2" fill="#8d8d8d"/></svg>
<svg class="ic" style="left:85px;top:346.2px" width="18" height="18" viewBox="0 0 18 18"><path d="M1,4.8 L4.4,1 L16.4,1 L16.4,13 L13,16.8 L1,16.8 Z" fill="#fdfdfd" stroke="#2b2b2b" stroke-width="1.2" stroke-linejoin="round"/><path d="M2.2,6 L12,6 L12,15.6 L2.2,15.6 Z" fill="#d3d6de"/><path d="M12.8,5.4 L15.6,2.4 L15.6,12.6 L12.8,15.6 Z" fill="#c3c7d2"/></svg>
<svg class="ic" style="left:110px;top:346.2px" width="18" height="18" viewBox="0 0 18 18"><g fill="none" stroke="#333" stroke-width="2.3" stroke-linecap="round"><path d="M7.6,6.2 L10.2,3.6 A3,3 0 0 1 14.6,7.8 L12,10.4 A3,3 0 0 1 8.6,10.6"/><path d="M10.4,11.8 L7.8,14.4 A3,3 0 0 1 3.4,10.2 L6,7.6 A3,3 0 0 1 9.4,7.4"/></g></svg>
<div class="lb" style="left:141.3px;top:347.9px">Cara_B v3:2</div>
<div class="row" style="left:58px;top:369.3px;width:148px"></div>
<svg class="ic" style="left:39.2px;top:371.2px" width="12" height="16" viewBox="0 0 12 16"><defs><linearGradient id="tg379" x1="0" y1="0" x2="1" y2="0"><stop offset="0" stop-color="#fff"/><stop offset="1" stop-color="#c8c8c8"/></linearGradient></defs><path d="M1.7,2 L1.7,14 L10,8 Z" fill="url(#tg379)" stroke="#2a2a2a" stroke-width="1.4" stroke-linejoin="round"/></svg>
<svg class="ic" style="left:60.5px;top:373.2px" width="17" height="12" viewBox="0 0 17 12"><path d="M0.5,6 Q4,1.2 8.5,1.2 Q13,1.2 16.5,6 Q13,10.8 8.5,10.8 Q4,10.8 0.5,6 Z" fill="#8d8d8d"/><circle cx="8.5" cy="6" r="3.2" fill="#f0f0f0"/><circle cx="8.5" cy="6" r="2" fill="#8d8d8d"/></svg>
<svg class="ic" style="left:85px;top:370.2px" width="18" height="18" viewBox="0 0 18 18"><path d="M1,4.8 L4.4,1 L16.4,1 L16.4,13 L13,16.8 L1,16.8 Z" fill="#fdfdfd" stroke="#2b2b2b" stroke-width="1.2" stroke-linejoin="round"/><path d="M2.2,6 L12,6 L12,15.6 L2.2,15.6 Z" fill="#d3d6de"/><path d="M12.8,5.4 L15.6,2.4 L15.6,12.6 L12.8,15.6 Z" fill="#c3c7d2"/></svg>
<svg class="ic" style="left:110px;top:370.2px" width="18" height="18" viewBox="0 0 18 18"><g fill="none" stroke="#333" stroke-width="2.3" stroke-linecap="round"><path d="M7.6,6.2 L10.2,3.6 A3,3 0 0 1 14.6,7.8 L12,10.4 A3,3 0 0 1 8.6,10.6"/><path d="M10.4,11.8 L7.8,14.4 A3,3 0 0 1 3.4,10.2 L6,7.6 A3,3 0 0 1 9.4,7.4"/></g></svg>
<div class="lb" style="left:141.3px;top:371.9px">Cara D v3:1</div>
</body></html>
